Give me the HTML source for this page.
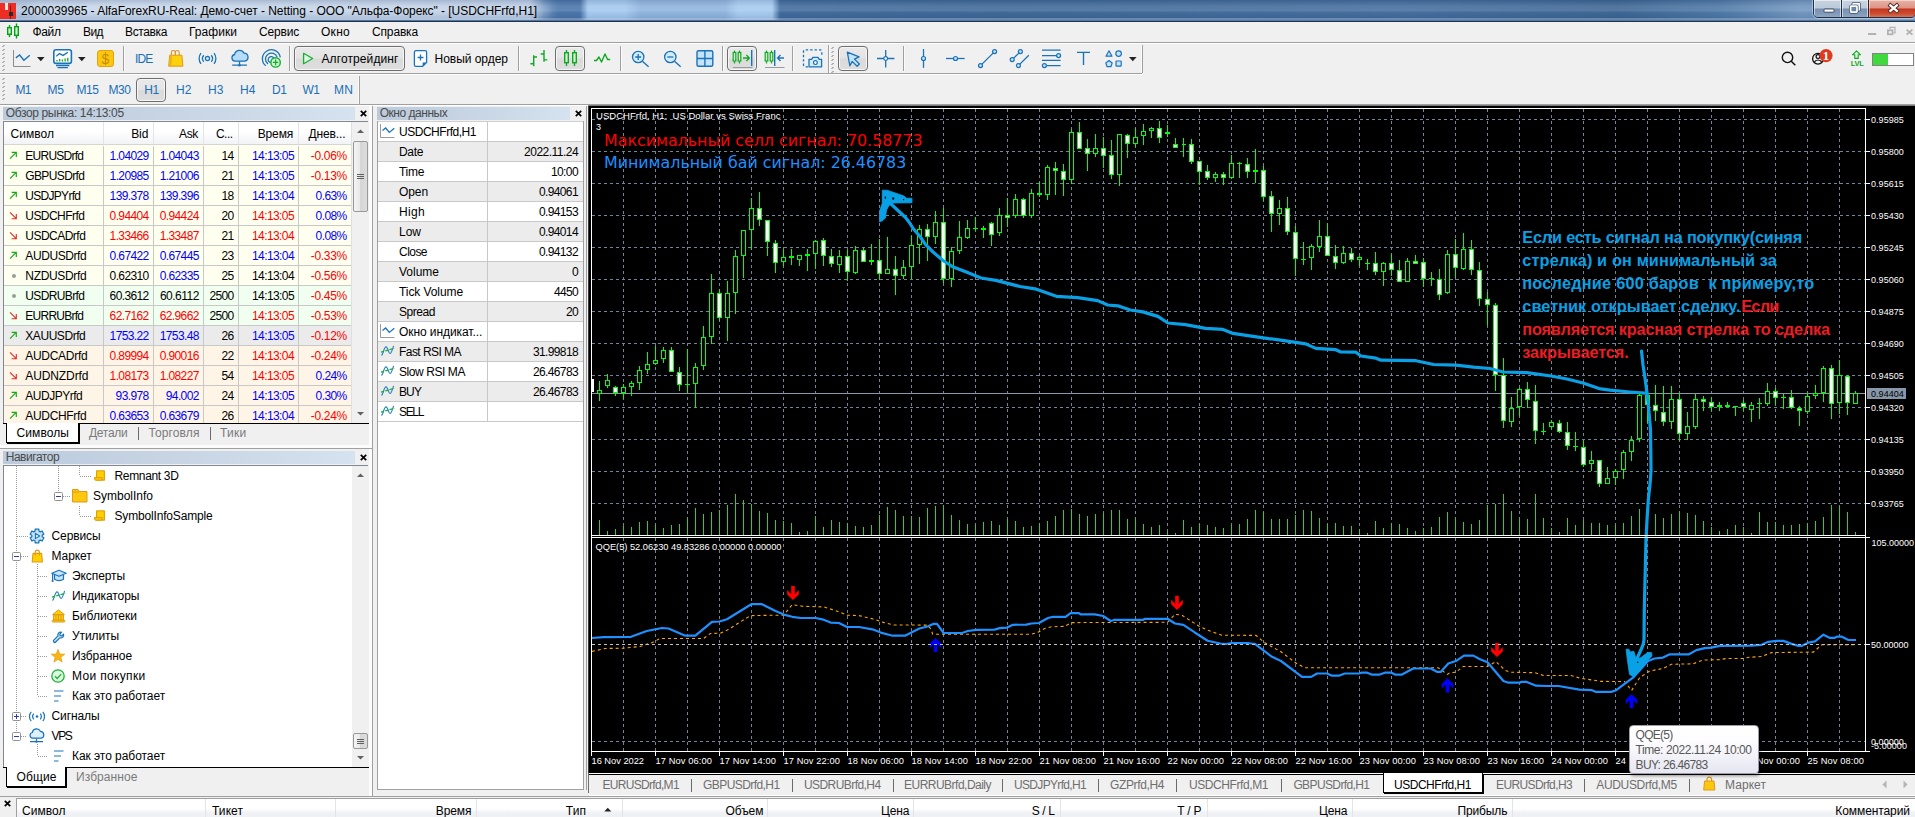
<!DOCTYPE html>
<html lang="ru"><head><meta charset="utf-8"><title>2000039965 - AlfaForexRU-Real</title><style>
html,body{margin:0;padding:0;}
body{width:1915px;height:817px;overflow:hidden;background:#f0f0f0;position:relative;
font-family:"Liberation Sans",sans-serif;font-size:12px;}
.t{position:absolute;white-space:pre;}
.r{position:absolute;}
svg{position:absolute;overflow:visible;}
</style></head>
<body>
<div class="r" style="left:0;top:0;width:1915px;height:21px;background:linear-gradient(90deg,#b0c5df 0px,#b6cae3 120px,#b0c5df 400px,#a9c0dd 530px,#5b84b6 544px,#4a75a9 560px,#4a75a9 580px,#a3c8ee 588px,#a3c8ee 625px,#8fb4dd 640px,#8fb4dd 725px,#a6caef 738px,#a6caef 772px,#416b9c 780px,#3f6997 1000px,#456e9e 1400px,#3d6693 1620px,#4d78a6 1720px,#7196bf 1800px,#6a91ba 1915px);"></div>
<div class="r" style="left:0;top:0;width:1915px;height:21px;background:linear-gradient(180deg,rgba(0,0,40,.10) 0,rgba(255,255,255,.10) 30%,rgba(255,255,255,.12) 50%,rgba(0,0,0,.0) 60%,rgba(0,0,40,.12) 100%);"></div>
<div class="r" style="left:30px;top:2px;width:520px;height:16px;border-radius:8px;background:rgba(255,255,255,.28);filter:blur(4px);"></div>
<div class="r" style="left:0px;top:18px;width:1915px;height:2px;background:rgba(190,215,240,.35);"></div>
<div class="r" style="left:0px;top:20px;width:1915px;height:1px;background:#5a7496;"></div>
<div class="r" style="left:0px;top:21px;width:1915px;height:1px;background:#1c3556;"></div>
<div class="r" style="left:0px;top:3px;width:16px;height:16px;background:#ee2e24;"></div>
<div class="r" style="left:5px;top:3px;width:3px;height:7px;background:#fbe3e0;"></div>
<div class="r" style="left:10px;top:5px;width:1px;height:14px;background:#7a1d18;"></div>
<div class="r" style="left:9px;top:12px;width:4px;height:4px;background:#2a2a2a;"></div>
<div class="t" style="left:21.00px;top:5.00px;font-size:12px;line-height:12px;color:#000;letter-spacing:-0.044px;">2000039965 - AlfaForexRU-Real: Демо-счет - Netting - ООО "Альфа-Форекс" - [USDCHFrfd,H1]</div>
<div class="r" style="left:1813px;top:-1px;width:103px;height:19px;border:1px solid #1f2f45;border-radius:0 0 5px 5px;box-sizing:border-box;overflow:hidden;box-shadow:0 0 0 1px rgba(255,255,255,.35);"><div class="r" style="left:0;top:0;width:27px;height:18px;background:linear-gradient(180deg,#c9d3df 0,#bccada 44%,#7891b2 50%,#829ab9 75%,#93a9c4 100%);box-shadow:inset 0 0 0 1px rgba(255,255,255,.55);"></div><div class="r" style="left:27px;top:0;width:1px;height:18px;background:#1f2f45;"></div><div class="r" style="left:28px;top:0;width:26px;height:18px;background:linear-gradient(180deg,#c9d3df 0,#bccada 44%,#7891b2 50%,#829ab9 75%,#93a9c4 100%);box-shadow:inset 0 0 0 1px rgba(255,255,255,.55);"></div><div class="r" style="left:54px;top:0;width:1px;height:18px;background:#4a1a12;"></div><div class="r" style="left:55px;top:0;width:47px;height:18px;background:linear-gradient(180deg,#e9b3a8 0,#dc9486 44%,#c23820 50%,#cc4a30 75%,#dd7a60 100%);box-shadow:inset 0 0 0 1px rgba(255,255,255,.45);"></div></div>
<svg style="left:0;top:0" width="1915" height="20"><rect x="1824" y="9" width="10" height="3.2" rx="0.6" fill="#fff" stroke="#3b4a5e" stroke-width="1"/><rect x="1853" y="3.6" width="6.4" height="6.4" rx="0.6" fill="#c3cfdc" stroke="#3b4a5e" stroke-width="3"/><rect x="1853" y="3.6" width="6.4" height="6.4" rx="0.6" fill="#b4c3d5" stroke="#fff" stroke-width="1.5"/><rect x="1850.6" y="6.2" width="6.4" height="6" rx="0.6" fill="#7e96b6" stroke="#3b4a5e" stroke-width="3"/><rect x="1850.6" y="6.2" width="6.4" height="6" rx="0.6" fill="#6d87a9" stroke="#fff" stroke-width="1.7"/><path d="M1890.4 5.4L1896.8 10.8M1896.8 5.4L1890.4 10.8" stroke="#4c2019" stroke-width="4" stroke-linecap="square"/><path d="M1890.4 5.4L1896.8 10.8M1896.8 5.4L1890.4 10.8" stroke="#fff" stroke-width="2.4" stroke-linecap="square"/></svg>
<div class="r" style="left:0px;top:22px;width:1915px;height:20px;background:#f0f0f0;"></div>
<div class="r" style="left:0px;top:42px;width:1915px;height:1px;background:#a0a0a0;"></div>
<div class="r" style="left:0px;top:43px;width:1915px;height:1px;background:#ffffff;"></div>
<svg style="left:6px;top:23px" width="16" height="18"><path d="M3.5 2v3M3.5 11v3M10.5 0.5v3.5M10.5 12v3.5" stroke="#00a014" stroke-width="1.4"/><rect x="1.7" y="4.7" width="3.6" height="6.6" fill="#d6f5d8" stroke="#00a014" stroke-width="1.4"/><rect x="8.7" y="3.7" width="3.6" height="8.6" fill="#d6f5d8" stroke="#00a014" stroke-width="1.4"/></svg>
<div class="t" style="left:32.50px;top:26.00px;font-size:12px;line-height:12px;color:#000;letter-spacing:-0.375px;">Файл</div>
<div class="t" style="left:83.00px;top:26.00px;font-size:12px;line-height:12px;color:#000;letter-spacing:-0.570px;">Вид</div>
<div class="t" style="left:125.00px;top:26.00px;font-size:12px;line-height:12px;color:#000;letter-spacing:-0.372px;">Вставка</div>
<div class="t" style="left:189.00px;top:26.00px;font-size:12px;line-height:12px;color:#000;letter-spacing:0.043px;">Графики</div>
<div class="t" style="left:259.00px;top:26.00px;font-size:12px;line-height:12px;color:#000;letter-spacing:-0.182px;">Сервис</div>
<div class="t" style="left:321.00px;top:26.00px;font-size:12px;line-height:12px;color:#000;letter-spacing:0.279px;">Окно</div>
<div class="t" style="left:372.00px;top:26.00px;font-size:12px;line-height:12px;color:#000;letter-spacing:-0.153px;">Справка</div>
<svg style="left:0;top:0" width="1915" height="42"><rect x="1868" y="33" width="8.2" height="2" fill="#b2b2b2"/><path d="M1890 29v-1.6h5v5.4h-1.4" fill="none" stroke="#b2b2b2" stroke-width="1.2"/><rect x="1887.9" y="30.3" width="4.6" height="4" fill="none" stroke="#b2b2b2" stroke-width="1.8"/><path d="M1906.6 29.6L1912.4 34.6M1912.4 29.6L1906.6 34.6" stroke="#b2b2b2" stroke-width="1.9"/></svg><div class="r" style="left:0px;top:73px;width:1142px;height:1px;background:#a0a0a0;"></div>
<div class="r" style="left:0px;top:74px;width:1142px;height:1px;background:#ffffff;"></div>
<div class="r" style="left:0px;top:104px;width:1915px;height:1px;background:#a0a0a0;"></div>
<div class="r" style="left:0px;top:105px;width:1915px;height:1px;background:#ffffff;"></div>
<div class="r" style="left:3px;top:45px;width:2px;height:1px;background:#b0b0b0;"></div><div class="r" style="left:2px;top:46px;width:2px;height:1px;background:#b8b8b8;"></div><div class="r" style="left:3px;top:49px;width:2px;height:1px;background:#b0b0b0;"></div><div class="r" style="left:2px;top:50px;width:2px;height:1px;background:#b8b8b8;"></div><div class="r" style="left:3px;top:53px;width:2px;height:1px;background:#b0b0b0;"></div><div class="r" style="left:2px;top:54px;width:2px;height:1px;background:#b8b8b8;"></div><div class="r" style="left:3px;top:57px;width:2px;height:1px;background:#b0b0b0;"></div><div class="r" style="left:2px;top:58px;width:2px;height:1px;background:#b8b8b8;"></div><div class="r" style="left:3px;top:61px;width:2px;height:1px;background:#b0b0b0;"></div><div class="r" style="left:2px;top:62px;width:2px;height:1px;background:#b8b8b8;"></div><div class="r" style="left:3px;top:65px;width:2px;height:1px;background:#b0b0b0;"></div><div class="r" style="left:2px;top:66px;width:2px;height:1px;background:#b8b8b8;"></div><div class="r" style="left:3px;top:69px;width:2px;height:1px;background:#b0b0b0;"></div><div class="r" style="left:2px;top:70px;width:2px;height:1px;background:#b8b8b8;"></div>
<div class="r" style="left:3px;top:78px;width:2px;height:1px;background:#b0b0b0;"></div><div class="r" style="left:2px;top:79px;width:2px;height:1px;background:#b8b8b8;"></div><div class="r" style="left:3px;top:82px;width:2px;height:1px;background:#b0b0b0;"></div><div class="r" style="left:2px;top:83px;width:2px;height:1px;background:#b8b8b8;"></div><div class="r" style="left:3px;top:86px;width:2px;height:1px;background:#b0b0b0;"></div><div class="r" style="left:2px;top:87px;width:2px;height:1px;background:#b8b8b8;"></div><div class="r" style="left:3px;top:90px;width:2px;height:1px;background:#b0b0b0;"></div><div class="r" style="left:2px;top:91px;width:2px;height:1px;background:#b8b8b8;"></div><div class="r" style="left:3px;top:94px;width:2px;height:1px;background:#b0b0b0;"></div><div class="r" style="left:2px;top:95px;width:2px;height:1px;background:#b8b8b8;"></div><div class="r" style="left:3px;top:98px;width:2px;height:1px;background:#b0b0b0;"></div><div class="r" style="left:2px;top:99px;width:2px;height:1px;background:#b8b8b8;"></div>
<div class="r" style="left:294px;top:46px;width:111px;height:25px;box-sizing:border-box;border:1px solid #6e6e6e;border-radius:4px;background:linear-gradient(180deg,#e9e9e9 0,#e4e4e4 48%,#dadada 52%,#dedede 100%);box-shadow:inset 0 0 0 1px #f6f6f6;"></div>
<div class="r" style="left:555px;top:46px;width:30px;height:25px;box-sizing:border-box;border:1px solid #6e6e6e;border-radius:4px;background:linear-gradient(180deg,#e9e9e9 0,#e4e4e4 48%,#dadada 52%,#dedede 100%);box-shadow:inset 0 0 0 1px #f6f6f6;"></div>
<div class="r" style="left:727px;top:46px;width:30px;height:25px;box-sizing:border-box;border:1px solid #6e6e6e;border-radius:4px;background:linear-gradient(180deg,#e9e9e9 0,#e4e4e4 48%,#dadada 52%,#dedede 100%);box-shadow:inset 0 0 0 1px #f6f6f6;"></div>
<div class="r" style="left:838px;top:46px;width:30px;height:25px;box-sizing:border-box;border:1px solid #6e6e6e;border-radius:4px;background:linear-gradient(180deg,#e9e9e9 0,#e4e4e4 48%,#dadada 52%,#dedede 100%);box-shadow:inset 0 0 0 1px #f6f6f6;"></div>
<div class="r" style="left:136px;top:78px;width:30px;height:24px;box-sizing:border-box;border:1px solid #6e6e6e;border-radius:4px;background:linear-gradient(180deg,#e9e9e9 0,#e4e4e4 48%,#dadada 52%,#dedede 100%);box-shadow:inset 0 0 0 1px #f6f6f6;"></div>
<div class="r" style="left:123px;top:46px;width:1px;height:25px;background:#a0a0a0;"></div><div class="r" style="left:124px;top:46px;width:1px;height:25px;background:#fbfbfb;"></div>
<div class="r" style="left:289px;top:46px;width:1px;height:25px;background:#a0a0a0;"></div><div class="r" style="left:290px;top:46px;width:1px;height:25px;background:#fbfbfb;"></div>
<div class="r" style="left:518px;top:46px;width:1px;height:25px;background:#a0a0a0;"></div><div class="r" style="left:519px;top:46px;width:1px;height:25px;background:#fbfbfb;"></div>
<div class="r" style="left:620px;top:46px;width:1px;height:25px;background:#a0a0a0;"></div><div class="r" style="left:621px;top:46px;width:1px;height:25px;background:#fbfbfb;"></div>
<div class="r" style="left:722px;top:46px;width:1px;height:25px;background:#a0a0a0;"></div><div class="r" style="left:723px;top:46px;width:1px;height:25px;background:#fbfbfb;"></div>
<div class="r" style="left:792px;top:46px;width:1px;height:25px;background:#a0a0a0;"></div><div class="r" style="left:793px;top:46px;width:1px;height:25px;background:#fbfbfb;"></div>
<div class="r" style="left:903px;top:46px;width:1px;height:25px;background:#a0a0a0;"></div><div class="r" style="left:904px;top:46px;width:1px;height:25px;background:#fbfbfb;"></div>
<div class="r" style="left:828px;top:45px;width:1px;height:28px;background:#a0a0a0;"></div><div class="r" style="left:829px;top:45px;width:1px;height:28px;background:#fbfbfb;"></div>
<div class="r" style="left:832px;top:47px;width:2px;height:1px;background:#b0b0b0;"></div><div class="r" style="left:831px;top:48px;width:2px;height:1px;background:#b8b8b8;"></div><div class="r" style="left:832px;top:51px;width:2px;height:1px;background:#b0b0b0;"></div><div class="r" style="left:831px;top:52px;width:2px;height:1px;background:#b8b8b8;"></div><div class="r" style="left:832px;top:55px;width:2px;height:1px;background:#b0b0b0;"></div><div class="r" style="left:831px;top:56px;width:2px;height:1px;background:#b8b8b8;"></div><div class="r" style="left:832px;top:59px;width:2px;height:1px;background:#b0b0b0;"></div><div class="r" style="left:831px;top:60px;width:2px;height:1px;background:#b8b8b8;"></div><div class="r" style="left:832px;top:63px;width:2px;height:1px;background:#b0b0b0;"></div><div class="r" style="left:831px;top:64px;width:2px;height:1px;background:#b8b8b8;"></div><div class="r" style="left:832px;top:67px;width:2px;height:1px;background:#b0b0b0;"></div><div class="r" style="left:831px;top:68px;width:2px;height:1px;background:#b8b8b8;"></div><div class="r" style="left:832px;top:71px;width:2px;height:1px;background:#b0b0b0;"></div><div class="r" style="left:831px;top:72px;width:2px;height:1px;background:#b8b8b8;"></div>
<div class="r" style="left:1141px;top:45px;width:1px;height:28px;background:#fbfbfb;"></div><div class="r" style="left:1142px;top:45px;width:1px;height:28px;background:#a0a0a0;"></div>
<div class="r" style="left:358px;top:76px;width:1px;height:28px;background:#fbfbfb;"></div><div class="r" style="left:359px;top:76px;width:1px;height:28px;background:#a0a0a0;"></div>
<svg style="left:0;top:0" width="1915" height="110"><path d="M13.5 50v16.5h17" fill="none" stroke="#8c8c8c" stroke-width="1"/><path d="M15.8 57.9l3.8-2.9 4.3 5.2 5.9-4.9" fill="none" stroke="#1a73b8" stroke-width="1.4"/><rect x="53.8" y="49.8" width="17.6" height="13.6" rx="2.2" fill="#fff" stroke="#1a73b8" stroke-width="1.6"/><path d="M56 65.5h13.4M57.5 67.6h10.4" stroke="#1a73b8" stroke-width="1.3"/><path d="M56.3 56.2l3.2-2.6 3.6 1.8 4.8-3.2" fill="none" stroke="#1a73b8" stroke-width="1.3"/><path d="M57 61.5v-1.6M59.7 61.5v-2.6M62.4 61.5v-2M65.1 61.5v-3M67.8 61.5v-3.8" stroke="#10a820" stroke-width="1.3"/><rect x="97.5" y="50.5" width="16" height="16" rx="2.5" fill="#fbc70f" stroke="#e3a30c" stroke-width="1"/><path d="M171.4 56v-3.6a1.9 1.9 0 0 1 3.8 0v3.6M175.4 56v-3.6a1.9 1.9 0 0 1 3.8 0v3.6" fill="none" stroke="#d9951c" stroke-width="1.1"/><path d="M169.7 55.2h12.2l1 11h-14.2z" fill="#fbd20d" stroke="#dd9a1a" stroke-width="1"/><path d="M169.7 55.2h2.3l-.6 11h-2.7z" fill="#eeb212"/><circle cx="207.5" cy="58.5" r="2.1" fill="#c5e3fa" stroke="#1a73b8" stroke-width="1.2"/><path d="M203.8 55.2a5 5 0 0 0 0 6.6M211.2 55.2a5 5 0 0 1 0 6.6M201 53.2a8.4 8.4 0 0 0 0 10.6M214 53.2a8.4 8.4 0 0 1 0 10.6" fill="none" stroke="#1a73b8" stroke-width="1.3"/><path d="M235 61.2a3.4 3.4 0 0 1 -.4-6.7 5 5 0 0 1 9.4-1.4 4.1 4.1 0 0 1 .8 8.1z" fill="#b5dcf8" stroke="#1a73b8" stroke-width="1.3"/><path d="M239.5 61.5v2.5M232.2 65.2h14.8" stroke="#1a73b8" stroke-width="1.3"/><circle cx="239.5" cy="65.2" r="1.3" fill="#1a73b8"/><path d="M270.5 62.5a3 3 0 1 1 3.5-4M268 64a6 6 0 1 1 9.2-6.6M265.8 65.8a9 9 0 1 1 14.5-8.4" fill="none" stroke="#1a73b8" stroke-width="1.3"/><circle cx="275.6" cy="62.4" r="4.7" fill="#d9f7dc" stroke="#12b02a" stroke-width="1.4"/><path d="M272.8 62.4h5.6M275.6 59.6v5.6" stroke="#12b02a" stroke-width="1.4"/><path d="M303.6 53.3l9 5.2-9 5.2z" fill="#dff8e2" stroke="#17b030" stroke-width="1.3" stroke-linejoin="round"/><path d="M416 50.6h9a1.6 1.6 0 0 1 1.6 1.6v10.2l-4 4H416a1.6 1.6 0 0 1 -1.6-1.6V52.2a1.6 1.6 0 0 1 1.6-1.6z" fill="#fff" stroke="#1a73b8" stroke-width="1.3"/><path d="M426.6 62.4h-4v4z" fill="#1a73b8"/><path d="M417.6 57.5h5.8M420.5 54.6v5.8" stroke="#1a73b8" stroke-width="1.3"/><path d="M533.7 55.2v11M530.4 63.8h3.3M533.7 57h3.3M544 50v11.8M540.7 54h3.3M544 59.9h3.3" fill="none" stroke="#10a820" stroke-width="1.4"/><path d="M566.5 50v2.5M566.5 63v3M574.5 50v2.5M574.5 63v3" stroke="#10a820" stroke-width="1.4"/><rect x="564.7" y="52.7" width="3.6" height="10" fill="#d6f5d8" stroke="#10a820" stroke-width="1.4"/><rect x="572.7" y="52.7" width="3.6" height="10" fill="#d6f5d8" stroke="#10a820" stroke-width="1.4"/><path d="M594 60.5h2.5l2.5-3.5 2.5 5 3.5-8 2.6 5.5h2.6" fill="none" stroke="#10a820" stroke-width="1.4" stroke-linejoin="round"/><circle cx="638.2" cy="57" r="5.7" fill="#d4ebfc" stroke="#1a73b8" stroke-width="1.3"/><path d="M642.4000000000001 61.2l6.2 5.6" stroke="#1a73b8" stroke-width="1.4"/><path d="M635.2 57h6M638.2 54v6" stroke="#1a73b8" stroke-width="1.3"/><circle cx="670.3" cy="57" r="5.7" fill="#d4ebfc" stroke="#1a73b8" stroke-width="1.3"/><path d="M674.5 61.2l6.2 5.6" stroke="#1a73b8" stroke-width="1.4"/><path d="M667.3 57h6" stroke="#1a73b8" stroke-width="1.3"/><rect x="697" y="50.7" width="15.8" height="15.6" rx="1.5" fill="#c5e3fa" stroke="#1a73b8" stroke-width="1.4"/><path d="M704.9 50.7v15.6M697 58.5h15.8" stroke="#1a73b8" stroke-width="1.4"/><path d="M734.5 50.5v2M734.5 61.5v2" stroke="#10a820" stroke-width="1.2"/><rect x="733.2" y="52.5" width="2.6" height="8.5" fill="#d6f5d8" stroke="#10a820" stroke-width="1.2"/><path d="M739.5 50.5v2M739.5 61.5v2" stroke="#10a820" stroke-width="1.2"/><rect x="738.2" y="52.5" width="2.6" height="8.5" fill="#d6f5d8" stroke="#10a820" stroke-width="1.2"/><path d="M743 58h6M746.4 55l3 3-3 3" fill="none" stroke="#10a820" stroke-width="1.3"/><path d="M751.7 50v16" stroke="#1a73b8" stroke-width="1.4"/><path d="M733 67.5h19.5" stroke="#9a9a9a" stroke-width="1"/><path d="M766.5 50.5v2M766.5 61.5v2" stroke="#10a820" stroke-width="1.2"/><rect x="765.2" y="52.5" width="2.6" height="8.5" fill="#d6f5d8" stroke="#10a820" stroke-width="1.2"/><path d="M771.5 50.5v2M771.5 61.5v2" stroke="#10a820" stroke-width="1.2"/><rect x="770.2" y="52.5" width="2.6" height="8.5" fill="#d6f5d8" stroke="#10a820" stroke-width="1.2"/><path d="M774.7 50v16" stroke="#1a73b8" stroke-width="1.4"/><path d="M777.5 58h6.5M780.5 55l-3 3 3 3" fill="none" stroke="#1a73b8" stroke-width="1.3"/><path d="M765 67.5h19.5" stroke="#9a9a9a" stroke-width="1"/><path d="M808 66.8h-3a1.5 1.5 0 0 1 -1.5-1.5V51.3a1.5 1.5 0 0 1 1.5-1.5h15.3a1.5 1.5 0 0 1 1.5 1.5v4" fill="none" stroke="#1a73b8" stroke-width="1.3" stroke-dasharray="2.4 2"/><path d="M809 59.3h2.6l1.2-2h5.2l1.2 2h2.4v7.5H809z" fill="#d4ebfc" stroke="#1a73b8" stroke-width="1.3" stroke-linejoin="round"/><circle cx="815.4" cy="62.6" r="1.9" fill="#fff" stroke="#1a73b8" stroke-width="1.2"/><path d="M847.3 52.2l11.8 4.6-4.6 2.3 4.9 4.9-2.3 2.3-4.9-4.9-2.3 4.4z" fill="#c5e3fa" stroke="#1a73b8" stroke-width="1.3" stroke-linejoin="round"/><path d="M877 58.5h17.4M885.7 50v17.5" stroke="#1a73b8" stroke-width="1.3"/><circle cx="885.7" cy="58.5" r="1.9" fill="#fff" stroke="#1a73b8" stroke-width="1.2"/><path d="M923.5 49v18.8" stroke="#1a73b8" stroke-width="1.3"/><circle cx="923.5" cy="58.5" r="2" fill="#c5e3fa" stroke="#1a73b8" stroke-width="1.2"/><path d="M946 58.5h18.6" stroke="#1a73b8" stroke-width="1.3"/><circle cx="955.5" cy="58.5" r="2" fill="#c5e3fa" stroke="#1a73b8" stroke-width="1.2"/><path d="M980.5 65.6L994.6 51.6" stroke="#1a73b8" stroke-width="1.3"/><circle cx="980.5" cy="65.6" r="2" fill="#c5e3fa" stroke="#1a73b8" stroke-width="1.2"/><circle cx="994.6" cy="51.6" r="2" fill="#c5e3fa" stroke="#1a73b8" stroke-width="1.2"/><path d="M1012.2 59.6l8.2-8M1018.4 65.6l10.4-10.4" stroke="#1a73b8" stroke-width="1.3"/><circle cx="1012.2" cy="59.6" r="2" fill="#c5e3fa" stroke="#1a73b8" stroke-width="1.2"/><circle cx="1020.4" cy="51.6" r="2" fill="#c5e3fa" stroke="#1a73b8" stroke-width="1.2"/><circle cx="1018.4" cy="65.6" r="2" fill="#c5e3fa" stroke="#1a73b8" stroke-width="1.2"/><path d="M1042 50.2h18.6M1042 55.6h18.6M1042 60.4h18.6M1042 65.6h18.6" stroke="#1a73b8" stroke-width="1.3"/><circle cx="1058.6" cy="55.6" r="2" fill="#c5e3fa" stroke="#1a73b8" stroke-width="1.2"/><circle cx="1044.4" cy="65.6" r="2" fill="#c5e3fa" stroke="#1a73b8" stroke-width="1.2"/><path d="M1077 52.4h13M1083.5 52.4v12.6" fill="none" stroke="#1a73b8" stroke-width="1.4"/><path d="M1109 50.8l3 5.4h-6z" fill="#c5e3fa" stroke="#1a73b8" stroke-width="1.2" stroke-linejoin="round"/><circle cx="1118.6" cy="53.6" r="2.8" fill="#c5e3fa" stroke="#1a73b8" stroke-width="1.2"/><path d="M1109 60.6l3.2 2.3-1.2 3.7h-4l-1.2-3.7z" fill="#c5e3fa" stroke="#1a73b8" stroke-width="1.2" stroke-linejoin="round"/><rect x="1116" y="61" width="5.2" height="5.2" rx="0.8" fill="#c5e3fa" stroke="#1a73b8" stroke-width="1.2"/><circle cx="1787.5" cy="57.4" r="5.2" fill="none" stroke="#111" stroke-width="1.4"/><path d="M1791.3 61.2l4 4" stroke="#111" stroke-width="1.5"/><circle cx="1818" cy="58.7" r="5.4" fill="none" stroke="#111" stroke-width="1.3"/><circle cx="1818" cy="56.6" r="1.9" fill="none" stroke="#111" stroke-width="1.2"/><path d="M1814.2 62.4a4.2 4.2 0 0 1 7.6 0" fill="none" stroke="#111" stroke-width="1.2"/><circle cx="1826" cy="55.6" r="6.6" fill="#e03a1e"/><path d="M1856.5 50.8l4 4h-2.3v3.6h-3.4v-3.6h-2.3z" fill="#d9f7dc" stroke="#10a820" stroke-width="1.1" stroke-linejoin="round"/></svg>
<svg style="left:36.5px;top:57px" width="8" height="5"><path d="M0 0h7.6L3.8 4.2z" fill="#222"/></svg><svg style="left:77.5px;top:57px" width="8" height="5"><path d="M0 0h7.6L3.8 4.2z" fill="#222"/></svg><svg style="left:1128.8px;top:57px" width="8" height="5"><path d="M0 0h7.6L3.8 4.2z" fill="#222"/></svg>
<div class="t" style="left:101.60px;top:52.00px;font-size:14px;line-height:14px;color:#c78f08;">$</div>
<div class="r" style="left:105px;top:52px;width:1px;height:13px;background:#c78f08;"></div>
<div class="t" style="left:135.00px;top:53.00px;font-size:12px;line-height:12px;color:#1a6fb5;letter-spacing:-0.835px;">IDE</div>
<div class="t" style="left:321.50px;top:53.00px;font-size:12px;line-height:12px;color:#000;letter-spacing:0.102px;">Алготрейдинг</div>
<div class="t" style="left:434.50px;top:53.00px;font-size:12px;line-height:12px;color:#000;letter-spacing:-0.027px;">Новый ордер</div>
<div class="t" style="left:1822.80px;top:49.00px;font-size:13px;line-height:13px;color:#fff;font-weight:bold;font-family:'Liberation Serif',serif;">1</div>
<div class="t" style="left:1850.80px;top:60.00px;font-size:7.5px;line-height:7.5px;color:#12a529;letter-spacing:-0.336px;font-weight:bold;">LVL</div>
<div class="r" style="left:1872px;top:53px;width:42px;height:13px;box-sizing:border-box;border:1px solid #828282;background:#fff;"></div>
<div class="r" style="left:1873px;top:54px;width:15px;height:11px;background:#3fd83f;"></div>
<div class="t" style="left:15.50px;top:84.00px;font-size:12px;line-height:12px;color:#1a6fb5;letter-spacing:-0.834px;">M1</div>
<div class="t" style="left:47.50px;top:84.00px;font-size:12px;line-height:12px;color:#1a6fb5;letter-spacing:-0.334px;">M5</div>
<div class="t" style="left:76.50px;top:84.00px;font-size:12px;line-height:12px;color:#1a6fb5;letter-spacing:-0.447px;">M15</div>
<div class="t" style="left:108.50px;top:84.00px;font-size:12px;line-height:12px;color:#1a6fb5;letter-spacing:-0.447px;">M30</div>
<div class="t" style="left:144.30px;top:84.00px;font-size:12px;line-height:12px;color:#1a6fb5;letter-spacing:-0.420px;">H1</div>
<div class="t" style="left:176.00px;top:84.00px;font-size:12px;line-height:12px;color:#1a6fb5;letter-spacing:0.080px;">H2</div>
<div class="t" style="left:208.00px;top:84.00px;font-size:12px;line-height:12px;color:#1a6fb5;letter-spacing:0.080px;">H3</div>
<div class="t" style="left:240.00px;top:84.00px;font-size:12px;line-height:12px;color:#1a6fb5;letter-spacing:0.080px;">H4</div>
<div class="t" style="left:272.00px;top:84.00px;font-size:12px;line-height:12px;color:#1a6fb5;letter-spacing:-0.420px;">D1</div>
<div class="t" style="left:302.50px;top:84.00px;font-size:12px;line-height:12px;color:#1a6fb5;letter-spacing:-0.500px;">W1</div>
<div class="t" style="left:334.00px;top:84.00px;font-size:12px;line-height:12px;color:#1a6fb5;letter-spacing:0.169px;">MN</div><div class="r" style="left:369px;top:106px;width:3px;height:690px;background:#fcfcfc;"></div>
<div class="r" style="left:372px;top:106px;width:1px;height:690px;background:#a0a0a0;"></div>
<div class="r" style="left:3px;top:107px;width:352px;height:13px;background:linear-gradient(90deg,#bccbdc 0,#c8d6e5 55%,#d5e3f0 100%);"></div><div class="t" style="left:5.70px;top:107.00px;font-size:12px;line-height:12px;color:#4a4a4a;letter-spacing:-0.356px;">Обзор рынка: 14:13:05</div>
<svg style="left:359.5px;top:109.5px" width="8" height="8"><path d="M0.8 0.8L6.2 6.2M6.2 0.8L0.8 6.2" stroke="#000" stroke-width="1.7"/></svg>
<div class="r" style="left:3px;top:121px;width:365px;height:302px;box-sizing:border-box;border:1px solid #828790;border-bottom:none;background:#fff;overflow:hidden;"></div>
<div class="r" style="left:4px;top:122px;width:347px;height:22px;background:linear-gradient(180deg,#ffffff 0,#ffffff 40%,#f2f3f6 100%);"></div>
<div class="r" style="left:4px;top:144px;width:347px;height:1px;background:#d5d5d5;"></div>
<div class="r" style="left:103px;top:122px;width:1px;height:22px;background:#e3e4e8;"></div>
<div class="r" style="left:153px;top:122px;width:1px;height:22px;background:#e3e4e8;"></div>
<div class="r" style="left:203px;top:122px;width:1px;height:22px;background:#e3e4e8;"></div>
<div class="r" style="left:238px;top:122px;width:1px;height:22px;background:#e3e4e8;"></div>
<div class="r" style="left:298px;top:122px;width:1px;height:22px;background:#e3e4e8;"></div>
<div class="r" style="left:351px;top:122px;width:1px;height:301px;background:#e0e0e0;"></div>
<div class="t" style="left:10.50px;top:128.00px;font-size:12px;line-height:12px;color:#000;letter-spacing:0.038px;">Символ</div>
<div class="t" style="left:131.19px;top:128.00px;font-size:12px;line-height:12px;color:#000;letter-spacing:-0.115px;">Bid</div>
<div class="t" style="left:178.97px;top:128.00px;font-size:12px;line-height:12px;color:#000;letter-spacing:-0.335px;">Ask</div>
<div class="t" style="left:216.00px;top:128.00px;font-size:12px;line-height:12px;color:#000;letter-spacing:-0.542px;">С...</div>
<div class="t" style="left:257.63px;top:128.00px;font-size:12px;line-height:12px;color:#000;letter-spacing:-0.108px;">Время</div>
<div class="t" style="left:308.50px;top:128.00px;font-size:12px;line-height:12px;color:#000;letter-spacing:-0.115px;">Днев...</div>
<div class="r" style="left:4px;top:145px;width:347px;height:20px;background:#fffff0;"></div>
<svg style="left:9px;top:151px" width="9" height="9"><path d="M1 7.6L7 1.6M2.6 1.3h4.7v4.7" fill="none" stroke="#18a818" stroke-width="1.15"/></svg>
<div class="t" style="left:25.30px;top:150.00px;font-size:12px;line-height:12px;color:#000;letter-spacing:-0.742px;">EURUSDrfd</div>
<div class="t" style="left:109.58px;top:150.00px;font-size:12px;line-height:12px;color:#0000ff;letter-spacing:-0.625px;">1.04029</div>
<div class="t" style="left:159.78px;top:150.00px;font-size:12px;line-height:12px;color:#0000ff;letter-spacing:-0.625px;">1.04043</div>
<div class="t" style="left:221.53px;top:150.00px;font-size:12px;line-height:12px;color:#000;letter-spacing:-0.673px;">14</div>
<div class="t" style="left:252.01px;top:150.00px;font-size:12px;line-height:12px;color:#0000ff;letter-spacing:-0.588px;">14:13:05</div>
<div class="t" style="left:310.86px;top:150.00px;font-size:12px;line-height:12px;color:#ff0000;letter-spacing:-0.337px;">-0.06%</div>
<div class="r" style="left:4px;top:165px;width:347px;height:20px;background:#fffff0;"></div>
<svg style="left:9px;top:171px" width="9" height="9"><path d="M1 7.6L7 1.6M2.6 1.3h4.7v4.7" fill="none" stroke="#18a818" stroke-width="1.15"/></svg>
<div class="t" style="left:25.30px;top:170.00px;font-size:12px;line-height:12px;color:#000;letter-spacing:-0.631px;">GBPUSDrfd</div>
<div class="t" style="left:109.58px;top:170.00px;font-size:12px;line-height:12px;color:#0000ff;letter-spacing:-0.625px;">1.20985</div>
<div class="t" style="left:159.78px;top:170.00px;font-size:12px;line-height:12px;color:#0000ff;letter-spacing:-0.625px;">1.21006</div>
<div class="t" style="left:221.53px;top:170.00px;font-size:12px;line-height:12px;color:#000;letter-spacing:-0.673px;">21</div>
<div class="t" style="left:252.01px;top:170.00px;font-size:12px;line-height:12px;color:#0000ff;letter-spacing:-0.588px;">14:13:05</div>
<div class="t" style="left:310.86px;top:170.00px;font-size:12px;line-height:12px;color:#ff0000;letter-spacing:-0.337px;">-0.13%</div>
<div class="r" style="left:4px;top:185px;width:347px;height:20px;background:#fffff0;"></div>
<svg style="left:9px;top:191px" width="9" height="9"><path d="M1 7.6L7 1.6M2.6 1.3h4.7v4.7" fill="none" stroke="#18a818" stroke-width="1.15"/></svg>
<div class="t" style="left:25.30px;top:190.00px;font-size:12px;line-height:12px;color:#000;letter-spacing:-0.705px;">USDJPYrfd</div>
<div class="t" style="left:109.58px;top:190.00px;font-size:12px;line-height:12px;color:#0000ff;letter-spacing:-0.625px;">139.378</div>
<div class="t" style="left:159.78px;top:190.00px;font-size:12px;line-height:12px;color:#0000ff;letter-spacing:-0.625px;">139.396</div>
<div class="t" style="left:221.53px;top:190.00px;font-size:12px;line-height:12px;color:#000;letter-spacing:-0.673px;">18</div>
<div class="t" style="left:252.01px;top:190.00px;font-size:12px;line-height:12px;color:#0000ff;letter-spacing:-0.588px;">14:13:04</div>
<div class="t" style="left:315.60px;top:190.00px;font-size:12px;line-height:12px;color:#0000ff;letter-spacing:-0.605px;">0.63%</div>
<div class="r" style="left:4px;top:205px;width:347px;height:20px;background:#fffff0;"></div>
<svg style="left:9px;top:211px" width="9" height="9"><path d="M1 1.4L7 7.4M2.6 7.7h4.7v-4.7" fill="none" stroke="#e03030" stroke-width="1.15"/></svg>
<div class="t" style="left:25.30px;top:210.00px;font-size:12px;line-height:12px;color:#000;letter-spacing:-0.556px;">USDCHFrfd</div>
<div class="t" style="left:109.58px;top:210.00px;font-size:12px;line-height:12px;color:#ff0000;letter-spacing:-0.625px;">0.94404</div>
<div class="t" style="left:159.78px;top:210.00px;font-size:12px;line-height:12px;color:#ff0000;letter-spacing:-0.625px;">0.94424</div>
<div class="t" style="left:221.53px;top:210.00px;font-size:12px;line-height:12px;color:#000;letter-spacing:-0.673px;">20</div>
<div class="t" style="left:252.01px;top:210.00px;font-size:12px;line-height:12px;color:#ff0000;letter-spacing:-0.588px;">14:13:05</div>
<div class="t" style="left:315.60px;top:210.00px;font-size:12px;line-height:12px;color:#0000ff;letter-spacing:-0.605px;">0.08%</div>
<div class="r" style="left:4px;top:225px;width:347px;height:20px;background:#fffff0;"></div>
<svg style="left:9px;top:231px" width="9" height="9"><path d="M1 1.4L7 7.4M2.6 7.7h4.7v-4.7" fill="none" stroke="#e03030" stroke-width="1.15"/></svg>
<div class="t" style="left:25.30px;top:230.00px;font-size:12px;line-height:12px;color:#000;letter-spacing:-0.520px;">USDCADrfd</div>
<div class="t" style="left:109.58px;top:230.00px;font-size:12px;line-height:12px;color:#ff0000;letter-spacing:-0.625px;">1.33466</div>
<div class="t" style="left:159.78px;top:230.00px;font-size:12px;line-height:12px;color:#ff0000;letter-spacing:-0.625px;">1.33487</div>
<div class="t" style="left:221.53px;top:230.00px;font-size:12px;line-height:12px;color:#000;letter-spacing:-0.673px;">21</div>
<div class="t" style="left:252.01px;top:230.00px;font-size:12px;line-height:12px;color:#ff0000;letter-spacing:-0.588px;">14:13:04</div>
<div class="t" style="left:315.60px;top:230.00px;font-size:12px;line-height:12px;color:#0000ff;letter-spacing:-0.605px;">0.08%</div>
<div class="r" style="left:4px;top:245px;width:347px;height:20px;background:#fffff0;"></div>
<svg style="left:9px;top:251px" width="9" height="9"><path d="M1 7.6L7 1.6M2.6 1.3h4.7v4.7" fill="none" stroke="#18a818" stroke-width="1.15"/></svg>
<div class="t" style="left:25.30px;top:250.00px;font-size:12px;line-height:12px;color:#000;letter-spacing:-0.408px;">AUDUSDrfd</div>
<div class="t" style="left:109.58px;top:250.00px;font-size:12px;line-height:12px;color:#0000ff;letter-spacing:-0.625px;">0.67422</div>
<div class="t" style="left:159.78px;top:250.00px;font-size:12px;line-height:12px;color:#0000ff;letter-spacing:-0.625px;">0.67445</div>
<div class="t" style="left:221.53px;top:250.00px;font-size:12px;line-height:12px;color:#000;letter-spacing:-0.673px;">23</div>
<div class="t" style="left:252.01px;top:250.00px;font-size:12px;line-height:12px;color:#0000ff;letter-spacing:-0.588px;">14:13:04</div>
<div class="t" style="left:310.86px;top:250.00px;font-size:12px;line-height:12px;color:#ff0000;letter-spacing:-0.337px;">-0.33%</div>
<div class="r" style="left:4px;top:265px;width:347px;height:20px;background:#fffff0;"></div>
<div class="r" style="left:11.5px;top:273.5px;width:4px;height:4px;border-radius:2px;background:#9c9c9c;"></div>
<div class="t" style="left:25.30px;top:270.00px;font-size:12px;line-height:12px;color:#000;letter-spacing:-0.333px;">NZDUSDrfd</div>
<div class="t" style="left:109.58px;top:270.00px;font-size:12px;line-height:12px;color:#000;letter-spacing:-0.625px;">0.62310</div>
<div class="t" style="left:159.78px;top:270.00px;font-size:12px;line-height:12px;color:#0000ff;letter-spacing:-0.625px;">0.62335</div>
<div class="t" style="left:221.53px;top:270.00px;font-size:12px;line-height:12px;color:#000;letter-spacing:-0.673px;">25</div>
<div class="t" style="left:252.01px;top:270.00px;font-size:12px;line-height:12px;color:#000;letter-spacing:-0.588px;">14:13:04</div>
<div class="t" style="left:310.86px;top:270.00px;font-size:12px;line-height:12px;color:#ff0000;letter-spacing:-0.337px;">-0.56%</div>
<div class="r" style="left:4px;top:285px;width:347px;height:20px;background:#f0fff0;"></div>
<div class="r" style="left:11.5px;top:293.5px;width:4px;height:4px;border-radius:2px;background:#9c9c9c;"></div>
<div class="t" style="left:25.30px;top:290.00px;font-size:12px;line-height:12px;color:#000;letter-spacing:-0.631px;">USDRUBrfd</div>
<div class="t" style="left:109.58px;top:290.00px;font-size:12px;line-height:12px;color:#000;letter-spacing:-0.625px;">60.3612</div>
<div class="t" style="left:159.90px;top:290.00px;font-size:12px;line-height:12px;color:#000;letter-spacing:-0.497px;">60.6112</div>
<div class="t" style="left:209.53px;top:290.00px;font-size:12px;line-height:12px;color:#000;letter-spacing:-0.673px;">2500</div>
<div class="t" style="left:252.01px;top:290.00px;font-size:12px;line-height:12px;color:#000;letter-spacing:-0.588px;">14:13:05</div>
<div class="t" style="left:310.86px;top:290.00px;font-size:12px;line-height:12px;color:#ff0000;letter-spacing:-0.337px;">-0.45%</div>
<div class="r" style="left:4px;top:305px;width:347px;height:20px;background:#f0fff0;"></div>
<svg style="left:9px;top:311px" width="9" height="9"><path d="M1 1.4L7 7.4M2.6 7.7h4.7v-4.7" fill="none" stroke="#e03030" stroke-width="1.15"/></svg>
<div class="t" style="left:25.30px;top:310.00px;font-size:12px;line-height:12px;color:#000;letter-spacing:-0.742px;">EURRUBrfd</div>
<div class="t" style="left:109.58px;top:310.00px;font-size:12px;line-height:12px;color:#ff0000;letter-spacing:-0.625px;">62.7162</div>
<div class="t" style="left:159.78px;top:310.00px;font-size:12px;line-height:12px;color:#ff0000;letter-spacing:-0.625px;">62.9662</div>
<div class="t" style="left:209.53px;top:310.00px;font-size:12px;line-height:12px;color:#000;letter-spacing:-0.673px;">2500</div>
<div class="t" style="left:252.01px;top:310.00px;font-size:12px;line-height:12px;color:#ff0000;letter-spacing:-0.588px;">14:13:05</div>
<div class="t" style="left:310.86px;top:310.00px;font-size:12px;line-height:12px;color:#ff0000;letter-spacing:-0.337px;">-0.53%</div>
<div class="r" style="left:4px;top:325px;width:347px;height:20px;background:#ebebeb;"></div>
<svg style="left:9px;top:331px" width="9" height="9"><path d="M1 7.6L7 1.6M2.6 1.3h4.7v4.7" fill="none" stroke="#18a818" stroke-width="1.15"/></svg>
<div class="t" style="left:25.30px;top:330.00px;font-size:12px;line-height:12px;color:#000;letter-spacing:-0.446px;">XAUUSDrfd</div>
<div class="t" style="left:109.58px;top:330.00px;font-size:12px;line-height:12px;color:#0000ff;letter-spacing:-0.625px;">1753.22</div>
<div class="t" style="left:159.78px;top:330.00px;font-size:12px;line-height:12px;color:#0000ff;letter-spacing:-0.625px;">1753.48</div>
<div class="t" style="left:221.53px;top:330.00px;font-size:12px;line-height:12px;color:#000;letter-spacing:-0.673px;">26</div>
<div class="t" style="left:252.01px;top:330.00px;font-size:12px;line-height:12px;color:#0000ff;letter-spacing:-0.588px;">14:13:05</div>
<div class="t" style="left:310.86px;top:330.00px;font-size:12px;line-height:12px;color:#ff0000;letter-spacing:-0.337px;">-0.12%</div>
<div class="r" style="left:4px;top:345px;width:347px;height:20px;background:#fff5e6;"></div>
<svg style="left:9px;top:351px" width="9" height="9"><path d="M1 1.4L7 7.4M2.6 7.7h4.7v-4.7" fill="none" stroke="#e03030" stroke-width="1.15"/></svg>
<div class="t" style="left:25.30px;top:350.00px;font-size:12px;line-height:12px;color:#000;letter-spacing:-0.297px;">AUDCADrfd</div>
<div class="t" style="left:109.58px;top:350.00px;font-size:12px;line-height:12px;color:#ff0000;letter-spacing:-0.625px;">0.89994</div>
<div class="t" style="left:159.78px;top:350.00px;font-size:12px;line-height:12px;color:#ff0000;letter-spacing:-0.625px;">0.90016</div>
<div class="t" style="left:221.53px;top:350.00px;font-size:12px;line-height:12px;color:#000;letter-spacing:-0.673px;">22</div>
<div class="t" style="left:252.01px;top:350.00px;font-size:12px;line-height:12px;color:#ff0000;letter-spacing:-0.588px;">14:13:04</div>
<div class="t" style="left:310.86px;top:350.00px;font-size:12px;line-height:12px;color:#ff0000;letter-spacing:-0.337px;">-0.24%</div>
<div class="r" style="left:4px;top:365px;width:347px;height:20px;background:#fff5e6;"></div>
<svg style="left:9px;top:371px" width="9" height="9"><path d="M1 1.4L7 7.4M2.6 7.7h4.7v-4.7" fill="none" stroke="#e03030" stroke-width="1.15"/></svg>
<div class="t" style="left:25.30px;top:370.00px;font-size:12px;line-height:12px;color:#000;letter-spacing:-0.111px;">AUDNZDrfd</div>
<div class="t" style="left:109.58px;top:370.00px;font-size:12px;line-height:12px;color:#ff0000;letter-spacing:-0.625px;">1.08173</div>
<div class="t" style="left:159.78px;top:370.00px;font-size:12px;line-height:12px;color:#ff0000;letter-spacing:-0.625px;">1.08227</div>
<div class="t" style="left:221.53px;top:370.00px;font-size:12px;line-height:12px;color:#000;letter-spacing:-0.673px;">54</div>
<div class="t" style="left:252.01px;top:370.00px;font-size:12px;line-height:12px;color:#ff0000;letter-spacing:-0.588px;">14:13:05</div>
<div class="t" style="left:315.60px;top:370.00px;font-size:12px;line-height:12px;color:#0000ff;letter-spacing:-0.605px;">0.24%</div>
<div class="r" style="left:4px;top:385px;width:347px;height:20px;background:#fff5e6;"></div>
<svg style="left:9px;top:391px" width="9" height="9"><path d="M1 7.6L7 1.6M2.6 1.3h4.7v4.7" fill="none" stroke="#18a818" stroke-width="1.15"/></svg>
<div class="t" style="left:25.30px;top:390.00px;font-size:12px;line-height:12px;color:#000;letter-spacing:-0.483px;">AUDJPYrfd</div>
<div class="t" style="left:115.58px;top:390.00px;font-size:12px;line-height:12px;color:#0000ff;letter-spacing:-0.617px;">93.978</div>
<div class="t" style="left:165.78px;top:390.00px;font-size:12px;line-height:12px;color:#0000ff;letter-spacing:-0.617px;">94.002</div>
<div class="t" style="left:221.53px;top:390.00px;font-size:12px;line-height:12px;color:#000;letter-spacing:-0.673px;">24</div>
<div class="t" style="left:252.01px;top:390.00px;font-size:12px;line-height:12px;color:#0000ff;letter-spacing:-0.588px;">14:13:05</div>
<div class="t" style="left:315.60px;top:390.00px;font-size:12px;line-height:12px;color:#0000ff;letter-spacing:-0.605px;">0.30%</div>
<div class="r" style="left:4px;top:405px;width:347px;height:18px;background:#fff5e6;"></div>
<svg style="left:9px;top:411px" width="9" height="9"><path d="M1 7.6L7 1.6M2.6 1.3h4.7v4.7" fill="none" stroke="#18a818" stroke-width="1.15"/></svg>
<div class="t" style="left:25.30px;top:410.00px;font-size:12px;line-height:12px;color:#000;letter-spacing:-0.333px;">AUDCHFrfd</div>
<div class="t" style="left:109.58px;top:410.00px;font-size:12px;line-height:12px;color:#0000ff;letter-spacing:-0.625px;">0.63653</div>
<div class="t" style="left:159.78px;top:410.00px;font-size:12px;line-height:12px;color:#0000ff;letter-spacing:-0.625px;">0.63679</div>
<div class="t" style="left:221.53px;top:410.00px;font-size:12px;line-height:12px;color:#000;letter-spacing:-0.673px;">26</div>
<div class="t" style="left:252.01px;top:410.00px;font-size:12px;line-height:12px;color:#0000ff;letter-spacing:-0.588px;">14:13:04</div>
<div class="t" style="left:310.86px;top:410.00px;font-size:12px;line-height:12px;color:#ff0000;letter-spacing:-0.337px;">-0.24%</div>
<div class="r" style="left:4px;top:165px;width:347px;height:1px;background:#c8c8c8;"></div>
<div class="r" style="left:4px;top:185px;width:347px;height:1px;background:#c8c8c8;"></div>
<div class="r" style="left:4px;top:205px;width:347px;height:1px;background:#c8c8c8;"></div>
<div class="r" style="left:4px;top:225px;width:347px;height:1px;background:#c8c8c8;"></div>
<div class="r" style="left:4px;top:245px;width:347px;height:1px;background:#c8c8c8;"></div>
<div class="r" style="left:4px;top:265px;width:347px;height:1px;background:#c8c8c8;"></div>
<div class="r" style="left:4px;top:285px;width:347px;height:1px;background:#c8c8c8;"></div>
<div class="r" style="left:4px;top:305px;width:347px;height:1px;background:#c8c8c8;"></div>
<div class="r" style="left:4px;top:325px;width:347px;height:1px;background:#c8c8c8;"></div>
<div class="r" style="left:4px;top:345px;width:347px;height:1px;background:#c8c8c8;"></div>
<div class="r" style="left:4px;top:365px;width:347px;height:1px;background:#c8c8c8;"></div>
<div class="r" style="left:4px;top:385px;width:347px;height:1px;background:#c8c8c8;"></div>
<div class="r" style="left:4px;top:405px;width:347px;height:1px;background:#c8c8c8;"></div>
<div class="r" style="left:103px;top:146px;width:1px;height:277px;background:#c8c8c8;"></div>
<div class="r" style="left:153px;top:146px;width:1px;height:277px;background:#c8c8c8;"></div>
<div class="r" style="left:203px;top:146px;width:1px;height:277px;background:#c8c8c8;"></div>
<div class="r" style="left:238px;top:146px;width:1px;height:277px;background:#c8c8c8;"></div>
<div class="r" style="left:298px;top:146px;width:1px;height:277px;background:#c8c8c8;"></div>
<div class="r" style="left:352px;top:122px;width:17px;height:301px;background:#f0f0f0;"></div><svg style="left:352px;top:122px" width="17" height="301"><path d="M5 11l3.5-3.5 3.5 3.5z" fill="#606060"/><path d="M5 290l3.5 3.5 3.5-3.5z" fill="#606060"/></svg><div class="r" style="left:352.5px;top:141px;width:15px;height:71px;box-sizing:border-box;border:1px solid #989898;border-radius:2px;background:linear-gradient(90deg,#f4f4f4 0,#e9e9e9 45%,#d6d6d6 50%,#dcdcdc 100%);"></div><div class="r" style="left:356.5px;top:174.0px;width:7px;height:1px;background:#5e5e5e;"></div><div class="r" style="left:356.5px;top:176.0px;width:7px;height:1px;background:#5e5e5e;"></div><div class="r" style="left:356.5px;top:178.0px;width:7px;height:1px;background:#5e5e5e;"></div>
<div class="r" style="left:3px;top:423px;width:366px;height:1px;background:#000;"></div>
<div class="r" style="left:6px;top:423px;width:73px;height:20px;box-sizing:border-box;border:1px solid #000;border-top:none;background:#fff;box-shadow:1px 1px 0 #000;"></div>
<div class="t" style="left:16.50px;top:427.00px;font-size:12px;line-height:12px;color:#000;letter-spacing:0.087px;">Символы</div>
<div class="t" style="left:89.00px;top:427.00px;font-size:12px;line-height:12px;color:#7a7a7a;letter-spacing:-0.273px;">Детали</div>
<div class="r" style="left:138px;top:427px;width:1px;height:13px;background:#6a6a6a;"></div>
<div class="t" style="left:148.50px;top:427.00px;font-size:12px;line-height:12px;color:#7a7a7a;letter-spacing:0.110px;">Торговля</div>
<div class="r" style="left:210px;top:427px;width:1px;height:13px;background:#6a6a6a;"></div>
<div class="t" style="left:220.00px;top:427.00px;font-size:12px;line-height:12px;color:#7a7a7a;letter-spacing:0.260px;">Тики</div>
<div class="r" style="left:0px;top:445px;width:372px;height:3px;background:#fcfcfc;"></div>
<div class="r" style="left:0px;top:448px;width:372px;height:1px;background:#a0a0a0;"></div><div class="r" style="left:3px;top:451px;width:352px;height:13px;background:linear-gradient(90deg,#bccbdc 0,#c8d6e5 55%,#d5e3f0 100%);"></div><div class="t" style="left:5.70px;top:451.00px;font-size:12px;line-height:12px;color:#4a4a4a;letter-spacing:-0.461px;">Навигатор</div>
<svg style="left:359.5px;top:453.5px" width="8" height="8"><path d="M0.8 0.8L6.2 6.2M6.2 0.8L0.8 6.2" stroke="#000" stroke-width="1.7"/></svg>
<div class="r" style="left:3px;top:465px;width:365px;height:303px;box-sizing:border-box;border:1px solid #828790;border-bottom:none;background:#fff;"></div>
<div class="r" style="left:352px;top:466px;width:17px;height:301px;background:#f0f0f0;"></div><svg style="left:352px;top:466px" width="17" height="301"><path d="M5 11l3.5-3.5 3.5 3.5z" fill="#606060"/><path d="M5 290l3.5 3.5 3.5-3.5z" fill="#606060"/></svg><div class="r" style="left:352.5px;top:733px;width:15px;height:16px;box-sizing:border-box;border:1px solid #989898;border-radius:2px;background:linear-gradient(90deg,#f4f4f4 0,#e9e9e9 45%,#d6d6d6 50%,#dcdcdc 100%);"></div><div class="r" style="left:356.5px;top:738.5px;width:7px;height:1px;background:#5e5e5e;"></div><div class="r" style="left:356.5px;top:740.5px;width:7px;height:1px;background:#5e5e5e;"></div><div class="r" style="left:356.5px;top:742.5px;width:7px;height:1px;background:#5e5e5e;"></div>
<svg style="left:0;top:0" width="372" height="790"><path d="M16.5 466V736" stroke="#9a9a9a" stroke-width="1" stroke-dasharray="1 1"/><path d="M58.5 466V491" stroke="#9a9a9a" stroke-width="1" stroke-dasharray="1 1"/><path d="M79.5 466V476" stroke="#9a9a9a" stroke-width="1" stroke-dasharray="1 1"/><path d="M80 476.5H91" stroke="#9a9a9a" stroke-width="1" stroke-dasharray="1 1"/><path d="M63 496.5H70" stroke="#9a9a9a" stroke-width="1" stroke-dasharray="1 1"/><path d="M79.5 506V516" stroke="#9a9a9a" stroke-width="1" stroke-dasharray="1 1"/><path d="M80 516.5H91" stroke="#9a9a9a" stroke-width="1" stroke-dasharray="1 1"/><path d="M17 536.5H28" stroke="#9a9a9a" stroke-width="1" stroke-dasharray="1 1"/><path d="M21 556.5H28" stroke="#9a9a9a" stroke-width="1" stroke-dasharray="1 1"/><path d="M37.5 564V696" stroke="#9a9a9a" stroke-width="1" stroke-dasharray="1 1"/><path d="M38 576.5H48" stroke="#9a9a9a" stroke-width="1" stroke-dasharray="1 1"/><path d="M38 596.5H48" stroke="#9a9a9a" stroke-width="1" stroke-dasharray="1 1"/><path d="M38 616.5H48" stroke="#9a9a9a" stroke-width="1" stroke-dasharray="1 1"/><path d="M38 636.5H48" stroke="#9a9a9a" stroke-width="1" stroke-dasharray="1 1"/><path d="M38 656.5H48" stroke="#9a9a9a" stroke-width="1" stroke-dasharray="1 1"/><path d="M38 676.5H48" stroke="#9a9a9a" stroke-width="1" stroke-dasharray="1 1"/><path d="M38 696.5H48" stroke="#9a9a9a" stroke-width="1" stroke-dasharray="1 1"/><path d="M21 716.5H27" stroke="#9a9a9a" stroke-width="1" stroke-dasharray="1 1"/><path d="M21 736.5H27" stroke="#9a9a9a" stroke-width="1" stroke-dasharray="1 1"/><path d="M37.5 744V756" stroke="#9a9a9a" stroke-width="1" stroke-dasharray="1 1"/><path d="M38 756.5H48" stroke="#9a9a9a" stroke-width="1" stroke-dasharray="1 1"/><rect x="54.5" y="492.5" width="8" height="8" rx="1" fill="#fff" stroke="#919191" stroke-width="1"/><path d="M56.0 496.5h5" stroke="#2c3f9a" stroke-width="1"/><rect x="12.5" y="552.5" width="8" height="8" rx="1" fill="#fff" stroke="#919191" stroke-width="1"/><path d="M14.0 556.5h5" stroke="#2c3f9a" stroke-width="1"/><rect x="12.5" y="712.5" width="8" height="8" rx="1" fill="#fff" stroke="#919191" stroke-width="1"/><path d="M14.0 716.5h5" stroke="#2c3f9a" stroke-width="1"/><path d="M16.5 714.0v5" stroke="#2c3f9a" stroke-width="1"/><rect x="12.5" y="732.5" width="8" height="8" rx="1" fill="#fff" stroke="#919191" stroke-width="1"/><path d="M14.0 736.5h5" stroke="#2c3f9a" stroke-width="1"/><path d="M96.6 470.9h7.8v9.2h-7.8z" fill="#ffd000" stroke="#e2a30a" stroke-width="1.2" stroke-linejoin="round"/><path d="M94.6 477.7h7.6v0.9a1.5 1.5 0 0 1 -1.5 1.5H95.9a1.4 1.4 0 0 1 -1.3-1.5z" fill="#ffd000" stroke="#e2a30a" stroke-width="1.2" stroke-linejoin="round"/><path d="M72.5 489.5h5.5l1.2 2h7.8v10.5h-14.5z" fill="#fbc70f" stroke="#dd9a1a" stroke-width="1"/><path d="M72.5 492h6.5" stroke="#dd9a1a" stroke-width="1"/><path d="M96.6 510.9h7.8v9.2h-7.8z" fill="#ffd000" stroke="#e2a30a" stroke-width="1.2" stroke-linejoin="round"/><path d="M94.6 517.7h7.6v0.9a1.5 1.5 0 0 1 -1.5 1.5H95.9a1.4 1.4 0 0 1 -1.3-1.5z" fill="#ffd000" stroke="#e2a30a" stroke-width="1.2" stroke-linejoin="round"/><path d="M35.1 529.2 L38.9 529.2 L38.9 531.0 L40.3 531.9 L42.0 530.9 L43.9 534.2 L42.2 535.1 L42.2 536.8 L43.9 537.8 L42.0 541.1 L40.4 540.1 L38.9 540.9 L38.9 542.8 L35.1 542.8 L35.1 541.0 L33.7 540.1 L32.0 541.1 L30.1 537.8 L31.8 536.9 L31.8 535.2 L30.1 534.2 L32.0 530.9 L33.6 531.9 L35.1 531.1z" fill="#c5e3fa" stroke="#1a73b8" stroke-width="1.2" stroke-linejoin="round"/><path d="M35.4 533.4l4.2 2.6-4.2 2.6z" fill="#e8f4fd" stroke="#1a73b8" stroke-width="1.1" stroke-linejoin="round"/><path d="M35.2 555.4v-3.2a2.1 2.1 0 0 1 4.2 0v3.2" fill="none" stroke="#dd9a1a" stroke-width="1.1"/><path d="M33 553.4h8.6l.8 8.6H32.2z" fill="#ffd000" stroke="#dd9a1a" stroke-width="1.1" stroke-linejoin="round"/><path d="M35.2 555.6v-2M39.4 555.6v-2" stroke="#dd9a1a" stroke-width="1.1"/><path d="M54.5 575v4.2c2.5 1.8 6.5 1.8 9 0v-4.2" fill="#c5e3fa" stroke="#1a73b8" stroke-width="1.2"/><path d="M51.8 573.2L59 570.2l7.2 3-7.2 3z" fill="#c5e3fa" stroke="#1a73b8" stroke-width="1.2" stroke-linejoin="round"/><path d="M52.6 573.8v6.6" stroke="#1a73b8" stroke-width="1.2"/><circle cx="52.6" cy="581" r="1.1" fill="#1a73b8"/><path d="M52.5 600.5c1.6-1 2.6-8.6 4.5-8.6s2.5 6.6 4 6.6 2.6-4.6 3.6-7.6" fill="none" stroke="#2a7fc4" stroke-width="1.15"/><path d="M52 597.1L65.2 593.3" fill="none" stroke="#16ae2e" stroke-width="1.3" stroke-dasharray="3 1.4"/><path d="M52.6 614.6L58.5 609.9l5.9 4.7z" fill="#ffd000" stroke="#dd9a1a" stroke-width="1" stroke-linejoin="round"/><rect x="53.6" y="614.8" width="9.8" height="5.4" fill="#ffd000" stroke="#dd9a1a" stroke-width="1"/><path d="M56 615v5M58.5 615v5M61 615v5" stroke="#dd9a1a" stroke-width="1"/><rect x="52.2" y="620.2" width="12.6" height="1.8" rx="0.6" fill="#ffd000" stroke="#dd9a1a" stroke-width="1"/><g transform="translate(58.6 636.2) scale(0.8) translate(-58.5 -636.5)"><path d="M52.5 641.5l5.2-5.4a3.6 3.6 0 0 1 4.6-4.6l-2.2 2.3 .4 1.9 1.9 .4 2.2-2.3a3.6 3.6 0 0 1 -4.6 4.7l-5.2 5.3a1.5 1.5 0 0 1 -2.3-2.3z" fill="#c5e3fa" stroke="#1a73b8" stroke-width="1.5" stroke-linejoin="round"/></g><path d="M58.0 649.4 L59.7 654.1 L64.7 654.2 L60.8 657.3 L62.1 662.1 L58.0 659.3 L53.9 662.1 L55.2 657.3 L51.3 654.2 L56.3 654.1z" fill="#f8b616" stroke="#e9a010" stroke-width="0.8" stroke-linejoin="round"/><circle cx="58" cy="676" r="6.2" fill="#dff8e2" stroke="#19b432" stroke-width="1.3"/><path d="M55 676.2l2.2 2.3 4-4.4" fill="none" stroke="#19b432" stroke-width="1.4"/><path d="M54 691.0h9.5M54 696.0h7M54 701.0h4.5" stroke="#1a73b8" stroke-width="1.2"/><circle cx="37" cy="716.5" r="1.3" fill="#1a73b8"/><path d="M33.8 713.7a4.3 4.3 0 0 0 0 5.6M40.2 713.7a4.3 4.3 0 0 1 0 5.6M31.2 711.9a7.4 7.4 0 0 0 0 9.2M42.8 711.9a7.4 7.4 0 0 1 0 9.2" fill="none" stroke="#1a73b8" stroke-width="1.2"/><path d="M32.6 738.2a2.9 2.9 0 0 1 -.3-5.7 4.3 4.3 0 0 1 8.1-1.2 3.5 3.5 0 0 1 .7 6.9z" fill="#dff0fc" stroke="#1a73b8" stroke-width="1.2"/><path d="M36.5 738.5v2.2M30 741.6h13" stroke="#1a73b8" stroke-width="1.2"/><circle cx="36.5" cy="741.6" r="1.2" fill="#1a73b8"/><path d="M54 751.0h9.5M54 756.0h7M54 761.0h4.5" stroke="#1a73b8" stroke-width="1.2"/></svg>
<div class="t" style="left:114.50px;top:470.00px;font-size:12px;line-height:12px;color:#000;letter-spacing:-0.336px;">Remnant 3D</div>
<div class="t" style="left:93.00px;top:490.00px;font-size:12px;line-height:12px;color:#000;">SymbolInfo</div>
<div class="t" style="left:114.50px;top:510.00px;font-size:12px;line-height:12px;color:#000;letter-spacing:-0.169px;">SymbolInfoSample</div>
<div class="t" style="left:51.50px;top:530.00px;font-size:12px;line-height:12px;color:#000;letter-spacing:-0.107px;">Сервисы</div>
<div class="t" style="left:51.50px;top:550.00px;font-size:12px;line-height:12px;color:#000;letter-spacing:-0.081px;">Маркет</div>
<div class="t" style="left:72.00px;top:570.00px;font-size:12px;line-height:12px;color:#000;letter-spacing:-0.085px;">Эксперты</div>
<div class="t" style="left:72.00px;top:590.00px;font-size:12px;line-height:12px;color:#000;letter-spacing:-0.089px;">Индикаторы</div>
<div class="t" style="left:72.00px;top:610.00px;font-size:12px;line-height:12px;color:#000;letter-spacing:-0.005px;">Библиотеки</div>
<div class="t" style="left:72.00px;top:630.00px;font-size:12px;line-height:12px;color:#000;letter-spacing:-0.102px;">Утилиты</div>
<div class="t" style="left:72.00px;top:650.00px;font-size:12px;line-height:12px;color:#000;letter-spacing:-0.087px;">Избранное</div>
<div class="t" style="left:72.00px;top:670.00px;font-size:12px;line-height:12px;color:#000;letter-spacing:0.332px;">Мои покупки</div>
<div class="t" style="left:72.00px;top:690.00px;font-size:12px;line-height:12px;color:#000;letter-spacing:-0.050px;">Как это работает</div>
<div class="t" style="left:51.50px;top:710.00px;font-size:12px;line-height:12px;color:#000;letter-spacing:-0.104px;">Сигналы</div>
<div class="t" style="left:51.50px;top:730.00px;font-size:12px;line-height:12px;color:#000;letter-spacing:-1.338px;">VPS</div>
<div class="t" style="left:72.00px;top:750.00px;font-size:12px;line-height:12px;color:#000;letter-spacing:-0.050px;">Как это работает</div>
<div class="r" style="left:3px;top:767px;width:366px;height:1px;background:#000;"></div>
<div class="r" style="left:6px;top:767px;width:60px;height:20px;box-sizing:border-box;border:1px solid #000;border-top:none;background:#fff;box-shadow:1px 1px 0 #000;"></div>
<div class="t" style="left:16.50px;top:771.00px;font-size:12px;line-height:12px;color:#000;letter-spacing:0.108px;">Общие</div>
<div class="t" style="left:76.00px;top:771.00px;font-size:12px;line-height:12px;color:#7a7a7a;letter-spacing:0.077px;">Избранное</div><div class="r" style="left:377px;top:107px;width:193px;height:13px;background:linear-gradient(90deg,#bccbdc 0,#c8d6e5 55%,#d5e3f0 100%);"></div><div class="t" style="left:379.70px;top:107.00px;font-size:12px;line-height:12px;color:#4a4a4a;letter-spacing:-0.479px;">Окно данных</div>
<svg style="left:574.5px;top:109.5px" width="8" height="8"><path d="M0.8 0.8L6.2 6.2M6.2 0.8L0.8 6.2" stroke="#000" stroke-width="1.7"/></svg>
<div class="r" style="left:377px;top:121px;width:207px;height:669px;box-sizing:border-box;border:1px solid #a0a0a0;border-top:none;background:#fff;"></div>
<div class="r" style="left:586px;top:106px;width:1px;height:684px;background:#a0a0a0;"></div>
<svg style="left:380px;top:124px" width="15" height="15"><path d="M0.5 0v13.5h14" fill="none" stroke="#9a9a9a" stroke-width="1"/><path d="M2.5 6.6l3.2-2.6 3.6 4.4 5-4.2" fill="none" stroke="#1a73b8" stroke-width="1.3"/></svg>
<div class="t" style="left:399.00px;top:126.00px;font-size:12px;line-height:12px;color:#000;letter-spacing:-0.473px;">USDCHFrfd,H1</div>
<div class="r" style="left:378px;top:141px;width:205px;height:20px;background:#ececec;"></div>
<div class="t" style="left:399.00px;top:146.00px;font-size:12px;line-height:12px;color:#000;letter-spacing:-0.337px;">Date</div>
<div class="t" style="left:524.08px;top:146.00px;font-size:12px;line-height:12px;color:#000;letter-spacing:-0.516px;">2022.11.24</div>
<div class="t" style="left:399.00px;top:166.00px;font-size:12px;line-height:12px;color:#000;letter-spacing:-0.305px;">Time</div>
<div class="t" style="left:550.99px;top:166.00px;font-size:12px;line-height:12px;color:#000;letter-spacing:-0.605px;">10:00</div>
<div class="r" style="left:378px;top:181px;width:205px;height:20px;background:#ececec;"></div>
<div class="t" style="left:399.00px;top:186.00px;font-size:12px;line-height:12px;color:#000;letter-spacing:-0.088px;">Open</div>
<div class="t" style="left:538.98px;top:186.00px;font-size:12px;line-height:12px;color:#000;letter-spacing:-0.625px;">0.94061</div>
<div class="t" style="left:399.00px;top:206.00px;font-size:12px;line-height:12px;color:#000;letter-spacing:0.330px;">High</div>
<div class="t" style="left:538.98px;top:206.00px;font-size:12px;line-height:12px;color:#000;letter-spacing:-0.625px;">0.94153</div>
<div class="r" style="left:378px;top:221px;width:205px;height:20px;background:#ececec;"></div>
<div class="t" style="left:399.00px;top:226.00px;font-size:12px;line-height:12px;color:#000;">Low</div>
<div class="t" style="left:538.98px;top:226.00px;font-size:12px;line-height:12px;color:#000;letter-spacing:-0.625px;">0.94014</div>
<div class="t" style="left:399.00px;top:246.00px;font-size:12px;line-height:12px;color:#000;letter-spacing:-0.536px;">Close</div>
<div class="t" style="left:538.98px;top:246.00px;font-size:12px;line-height:12px;color:#000;letter-spacing:-0.625px;">0.94132</div>
<div class="r" style="left:378px;top:261px;width:205px;height:20px;background:#ececec;"></div>
<div class="t" style="left:399.00px;top:266.00px;font-size:12px;line-height:12px;color:#000;">Volume</div>
<div class="t" style="left:571.93px;top:266.00px;font-size:12px;line-height:12px;color:#000;">0</div>
<div class="t" style="left:399.00px;top:286.00px;font-size:12px;line-height:12px;color:#000;letter-spacing:-0.083px;">Tick Volume</div>
<div class="t" style="left:553.93px;top:286.00px;font-size:12px;line-height:12px;color:#000;letter-spacing:-0.673px;">4450</div>
<div class="r" style="left:378px;top:301px;width:205px;height:20px;background:#ececec;"></div>
<div class="t" style="left:399.00px;top:306.00px;font-size:12px;line-height:12px;color:#000;letter-spacing:-0.449px;">Spread</div>
<div class="t" style="left:565.93px;top:306.00px;font-size:12px;line-height:12px;color:#000;letter-spacing:-0.673px;">20</div>
<svg style="left:380px;top:324px" width="15" height="15"><path d="M0.5 0v13.5h14" fill="none" stroke="#9a9a9a" stroke-width="1"/><path d="M2.5 6.6l3.2-2.6 3.6 4.4 5-4.2" fill="none" stroke="#1a73b8" stroke-width="1.3"/></svg>
<div class="t" style="left:399.00px;top:326.00px;font-size:12px;line-height:12px;color:#000;letter-spacing:-0.073px;">Окно индикат...</div>
<div class="r" style="left:378px;top:341px;width:205px;height:20px;background:#ececec;"></div>
<svg style="left:380px;top:344px" width="16" height="16"><path d="M1.5 11.5c1.6-1 2.6-8.6 4.5-8.6s2.5 6.6 4 6.6 2.6-4.6 3.6-7.6" fill="none" stroke="#2a7fc4" stroke-width="1.15"/><path d="M1 8.1L14.2 4.3" fill="none" stroke="#16ae2e" stroke-width="1.3" stroke-dasharray="3 1.4"/></svg>
<div class="t" style="left:399.00px;top:346.00px;font-size:12px;line-height:12px;color:#000;letter-spacing:-0.546px;">Fast RSI MA</div>
<div class="t" style="left:532.97px;top:346.00px;font-size:12px;line-height:12px;color:#000;letter-spacing:-0.631px;">31.99818</div>
<svg style="left:380px;top:364px" width="16" height="16"><path d="M1.5 11.5c1.6-1 2.6-8.6 4.5-8.6s2.5 6.6 4 6.6 2.6-4.6 3.6-7.6" fill="none" stroke="#2a7fc4" stroke-width="1.15"/><path d="M1 8.1L14.2 4.3" fill="none" stroke="#16ae2e" stroke-width="1.3" stroke-dasharray="3 1.4"/></svg>
<div class="t" style="left:399.00px;top:366.00px;font-size:12px;line-height:12px;color:#000;letter-spacing:-0.426px;">Slow RSI MA</div>
<div class="t" style="left:532.97px;top:366.00px;font-size:12px;line-height:12px;color:#000;letter-spacing:-0.631px;">26.46783</div>
<div class="r" style="left:378px;top:381px;width:205px;height:20px;background:#ececec;"></div>
<svg style="left:380px;top:384px" width="16" height="16"><path d="M1.5 11.5c1.6-1 2.6-8.6 4.5-8.6s2.5 6.6 4 6.6 2.6-4.6 3.6-7.6" fill="none" stroke="#2a7fc4" stroke-width="1.15"/><path d="M1 8.1L14.2 4.3" fill="none" stroke="#16ae2e" stroke-width="1.3" stroke-dasharray="3 1.4"/></svg>
<div class="t" style="left:399.00px;top:386.00px;font-size:12px;line-height:12px;color:#000;letter-spacing:-0.892px;">BUY</div>
<div class="t" style="left:532.97px;top:386.00px;font-size:12px;line-height:12px;color:#000;letter-spacing:-0.631px;">26.46783</div>
<svg style="left:380px;top:404px" width="16" height="16"><path d="M1.5 11.5c1.6-1 2.6-8.6 4.5-8.6s2.5 6.6 4 6.6 2.6-4.6 3.6-7.6" fill="none" stroke="#2a7fc4" stroke-width="1.15"/><path d="M1 8.1L14.2 4.3" fill="none" stroke="#16ae2e" stroke-width="1.3" stroke-dasharray="3 1.4"/></svg>
<div class="t" style="left:399.00px;top:406.00px;font-size:12px;line-height:12px;color:#000;letter-spacing:-1.339px;">SELL</div>
<div class="r" style="left:378px;top:141px;width:205px;height:1px;background:#c8c8c8;"></div>
<div class="r" style="left:378px;top:161px;width:205px;height:1px;background:#c8c8c8;"></div>
<div class="r" style="left:378px;top:181px;width:205px;height:1px;background:#c8c8c8;"></div>
<div class="r" style="left:378px;top:201px;width:205px;height:1px;background:#c8c8c8;"></div>
<div class="r" style="left:378px;top:221px;width:205px;height:1px;background:#c8c8c8;"></div>
<div class="r" style="left:378px;top:241px;width:205px;height:1px;background:#c8c8c8;"></div>
<div class="r" style="left:378px;top:261px;width:205px;height:1px;background:#c8c8c8;"></div>
<div class="r" style="left:378px;top:281px;width:205px;height:1px;background:#c8c8c8;"></div>
<div class="r" style="left:378px;top:301px;width:205px;height:1px;background:#c8c8c8;"></div>
<div class="r" style="left:378px;top:321px;width:205px;height:1px;background:#c8c8c8;"></div>
<div class="r" style="left:378px;top:341px;width:205px;height:1px;background:#c8c8c8;"></div>
<div class="r" style="left:378px;top:361px;width:205px;height:1px;background:#c8c8c8;"></div>
<div class="r" style="left:378px;top:381px;width:205px;height:1px;background:#c8c8c8;"></div>
<div class="r" style="left:378px;top:401px;width:205px;height:1px;background:#c8c8c8;"></div>
<div class="r" style="left:378px;top:421px;width:205px;height:1px;background:#c8c8c8;"></div>
<div class="r" style="left:487px;top:121px;width:1px;height:300px;background:#c8c8c8;"></div>
<div class="r" style="left:378px;top:121px;width:205px;height:1px;background:#d0d0d0;"></div><div class="r" style="left:588px;top:105px;width:1327px;height:1px;background:#7a7a7a;"></div>
<div class="r" style="left:588px;top:106px;width:1px;height:667px;background:#3a3a3a;"></div>
<div class="r" style="left:589px;top:106px;width:1326px;height:667px;background:#000;"></div>
<svg style="left:0;top:0" width="1915" height="817"><path d="M623.5 109V535M623.5 538V751M655.5 109V535M655.5 538V751M687.5 109V535M687.5 538V751M719.5 109V535M719.5 538V751M751.5 109V535M751.5 538V751M783.5 109V535M783.5 538V751M815.5 109V535M815.5 538V751M847.5 109V535M847.5 538V751M879.5 109V535M879.5 538V751M911.5 109V535M911.5 538V751M943.5 109V535M943.5 538V751M975.5 109V535M975.5 538V751M1007.5 109V535M1007.5 538V751M1039.5 109V535M1039.5 538V751M1071.5 109V535M1071.5 538V751M1103.5 109V535M1103.5 538V751M1135.5 109V535M1135.5 538V751M1167.5 109V535M1167.5 538V751M1199.5 109V535M1199.5 538V751M1231.5 109V535M1231.5 538V751M1263.5 109V535M1263.5 538V751M1295.5 109V535M1295.5 538V751M1327.5 109V535M1327.5 538V751M1359.5 109V535M1359.5 538V751M1391.5 109V535M1391.5 538V751M1423.5 109V535M1423.5 538V751M1455.5 109V535M1455.5 538V751M1487.5 109V535M1487.5 538V751M1519.5 109V535M1519.5 538V751M1551.5 109V535M1551.5 538V751M1583.5 109V535M1583.5 538V751M1615.5 109V535M1615.5 538V751M1647.5 109V535M1647.5 538V751M1679.5 109V535M1679.5 538V751M1711.5 109V535M1711.5 538V751M1743.5 109V535M1743.5 538V751M1775.5 109V535M1775.5 538V751M1807.5 109V535M1807.5 538V751M1839.5 109V535M1839.5 538V751M592 119.5H1865M592 151.5H1865M592 183.5H1865M592 215.5H1865M592 247.5H1865M592 279.5H1865M592 311.5H1865M592 343.5H1865M592 375.5H1865M592 407.5H1865M592 439.5H1865M592 471.5H1865M592 503.5H1865M592 741.5H1865" stroke="#71859a" stroke-width="1" stroke-dasharray="3 3" fill="none" shape-rendering="crispEdges"/><path d="M592 393.5H1865" stroke="#8796a8" stroke-width="1" shape-rendering="crispEdges"/><path d="M599.5 535V520M607.5 535V531M615.5 535V529M623.5 535V526M631.5 535V527M639.5 535V522M647.5 535V521M655.5 535V525M663.5 535V528M671.5 535V525M679.5 535V524M687.5 535V518M695.5 535V508M703.5 535V514M711.5 535V512M719.5 535V510M727.5 535V505M735.5 535V494M743.5 535V500M751.5 535V504M759.5 535V511M767.5 535V513M775.5 535V520M783.5 535V521M791.5 535V523M799.5 535V532M807.5 535V531M815.5 535V516M823.5 535V527M831.5 535V520M839.5 535V522M847.5 535V523M855.5 535V526M863.5 535V527M871.5 535V525M879.5 535V515M887.5 535V507M895.5 535V510M903.5 535V516M911.5 535V516M919.5 535V517M927.5 535V508M935.5 535V506M943.5 535V505M951.5 535V515M959.5 535V520M967.5 535V524M975.5 535V525M983.5 535V522M991.5 535V521M999.5 535V525M1007.5 535V519M1015.5 535V521M1023.5 535V527M1031.5 535V526M1039.5 535V523M1047.5 535V521M1055.5 535V516M1063.5 535V510M1071.5 535V509M1079.5 535V514M1087.5 535V516M1095.5 535V514M1103.5 535V513M1111.5 535V510M1119.5 535V510M1127.5 535V519M1135.5 535V518M1143.5 535V524M1151.5 535V527M1159.5 535V525M1167.5 535V531M1175.5 535V533M1183.5 535V520M1191.5 535V527M1199.5 535V524M1207.5 535V525M1215.5 535V527M1223.5 535V528M1231.5 535V525M1239.5 535V524M1247.5 535V519M1255.5 535V510M1263.5 535V512M1271.5 535V519M1279.5 535V519M1287.5 535V519M1295.5 535V515M1303.5 535V510M1311.5 535V511M1319.5 535V518M1327.5 535V524M1335.5 535V523M1343.5 535V526M1351.5 535V526M1359.5 535V529M1367.5 535V533M1375.5 535V521M1383.5 535V528M1391.5 535V523M1399.5 535V524M1407.5 535V528M1415.5 535V531M1423.5 535V528M1431.5 535V527M1439.5 535V517M1447.5 535V512M1455.5 535V518M1463.5 535V522M1471.5 535V524M1479.5 535V520M1487.5 535V505M1495.5 535V504M1503.5 535V494M1511.5 535V511M1519.5 535V518M1527.5 535V519M1535.5 535V494M1543.5 535V518M1551.5 535V528M1559.5 535V532M1567.5 535V518M1575.5 535V525M1583.5 535V520M1591.5 535V523M1599.5 535V523M1607.5 535V525M1615.5 535V525M1623.5 535V523M1631.5 535V516M1639.5 535V509M1647.5 535V515M1655.5 535V514M1663.5 535V518M1671.5 535V514M1679.5 535V511M1687.5 535V513M1695.5 535V515M1703.5 535V521M1711.5 535V527M1719.5 535V531M1727.5 535V529M1735.5 535V525M1743.5 535V527M1751.5 535V533M1759.5 535V512M1767.5 535V522M1775.5 535V522M1783.5 535V525M1791.5 535V525M1799.5 535V524M1807.5 535V523M1815.5 535V521M1823.5 535V517M1831.5 535V505M1839.5 535V506M1847.5 535V512M1855.5 535V532" stroke="#32cd32" stroke-width="1" shape-rendering="crispEdges"/><path d="M591.5 379V392M599.5 381V401M607.5 374V388M615.5 386V396M623.5 384V399M631.5 381V396M639.5 366V390M647.5 352V374M655.5 346V365M663.5 347V363M671.5 347V372M679.5 367V391M687.5 349V393M685 384.5H690M695.5 363V408M703.5 326V370M711.5 274V344M719.5 289V321M727.5 281V341M735.5 250V314M743.5 230V278M751.5 198V250M759.5 192V226M767.5 220V256M775.5 240V273M783.5 249V266M791.5 249V265M799.5 255V266M807.5 249V271M815.5 240V269M823.5 238V266M831.5 249V267M839.5 250V273M847.5 250V281M855.5 246V274M863.5 248V262M871.5 244V265M879.5 239V280M887.5 237V274M895.5 256V295M903.5 260V279M911.5 236V279M919.5 225V264M927.5 224V261M935.5 211V244M943.5 208V283M951.5 247V287M959.5 221V254M967.5 220V239M975.5 217V231M973 228.5H978M983.5 226V238M991.5 222V246M999.5 208V236M1007.5 198V227M1015.5 194V218M1023.5 198V218M1031.5 189V218M1039.5 182V197M1047.5 165V200M1055.5 162V195M1063.5 164V196M1071.5 129V184M1079.5 122V149M1087.5 139V171M1095.5 134V157M1103.5 137V168M1111.5 140V179M1119.5 134V186M1127.5 134V158M1135.5 128V147M1143.5 124V145M1151.5 127V138M1159.5 121V143M1167.5 125V137M1175.5 138V148M1183.5 138V157M1191.5 139V164M1199.5 161V185M1207.5 165V180M1215.5 172V182M1223.5 172V185M1231.5 155V179M1239.5 162V178M1237 163.5H1242M1247.5 158V178M1255.5 149V183M1263.5 166V201M1271.5 191V232M1279.5 200V225M1287.5 197V235M1295.5 226V276M1303.5 242V265M1301 259.5H1306M1311.5 244V270M1319.5 220V252M1327.5 223V256M1335.5 245V269M1343.5 246V264M1351.5 248V262M1359.5 256V266M1367.5 259V270M1365 263.5H1370M1375.5 252V275M1383.5 262V286M1391.5 254V276M1399.5 260V282M1407.5 258V282M1415.5 255V264M1423.5 258V287M1431.5 272V286M1429 278.5H1434M1439.5 269V300M1447.5 250V294M1455.5 239V278M1463.5 233V270M1471.5 240V275M1479.5 262V306M1487.5 292V325M1495.5 303V391M1503.5 358V428M1511.5 397V427M1519.5 388V416M1527.5 382V408M1535.5 385V444M1543.5 423V435M1541 431.5H1546M1551.5 420V429M1559.5 420V433M1567.5 422V450M1575.5 432V451M1573 446.5H1578M1583.5 440V467M1591.5 451V471M1599.5 460V487M1607.5 467V484M1615.5 469V485M1623.5 450V479M1631.5 436V461M1639.5 393V442M1647.5 388V423M1655.5 385V421M1663.5 386V426M1671.5 386V429M1679.5 393V441M1687.5 412V440M1695.5 394V429M1703.5 396V411M1711.5 397V411M1719.5 402V411M1727.5 402V407M1735.5 406V416M1733 406.5H1738M1743.5 400V411M1751.5 402V422M1759.5 398V419M1757 403.5H1762M1767.5 383V406M1775.5 388V405M1783.5 394V409M1781 397.5H1786M1791.5 390V409M1799.5 406V426M1807.5 393V414M1815.5 385V399M1823.5 366V402M1831.5 365V419M1839.5 360V414M1847.5 375V415M1855.5 391V404" stroke="#00ff00" stroke-width="1" fill="none" shape-rendering="crispEdges"/><path d="M597.5 390.5H601.5V393.5H597.5zM605.5 380.5H609.5V385.5H605.5zM621.5 387.5H625.5V392.5H621.5zM629.5 383.5H633.5V386.5H629.5zM637.5 370.5H641.5V382.5H637.5zM645.5 364.5H649.5V369.5H645.5zM653.5 360.5H657.5V363.5H653.5zM661.5 350.5H665.5V358.5H661.5zM693.5 367.5H697.5V383.5H693.5zM701.5 337.5H705.5V365.5H701.5zM709.5 293.5H713.5V336.5H709.5zM725.5 293.5H729.5V317.5H725.5zM733.5 256.5H737.5V292.5H733.5zM741.5 230.5H745.5V255.5H741.5zM749.5 208.5H753.5V229.5H749.5zM781.5 257.5H785.5V261.5H781.5zM789.5 256.5H793.5V257.5H789.5zM797.5 255.5H801.5V259.5H797.5zM813.5 241.5H817.5V253.5H813.5zM837.5 256.5H841.5V264.5H837.5zM853.5 250.5H857.5V272.5H853.5zM885.5 269.5H889.5V273.5H885.5zM901.5 267.5H905.5V275.5H901.5zM909.5 245.5H913.5V266.5H909.5zM917.5 229.5H921.5V244.5H917.5zM933.5 222.5H937.5V236.5H933.5zM949.5 251.5H953.5V278.5H949.5zM957.5 237.5H961.5V250.5H957.5zM965.5 228.5H969.5V237.5H965.5zM981.5 228.5H985.5V229.5H981.5zM997.5 215.5H1001.5V232.5H997.5zM1013.5 199.5H1017.5V215.5H1013.5zM1029.5 193.5H1033.5V215.5H1029.5zM1045.5 167.5H1049.5V194.5H1045.5zM1069.5 132.5H1073.5V179.5H1069.5zM1093.5 148.5H1097.5V153.5H1093.5zM1117.5 134.5H1121.5V174.5H1117.5zM1133.5 137.5H1137.5V143.5H1133.5zM1141.5 131.5H1145.5V135.5H1141.5zM1149.5 128.5H1153.5V130.5H1149.5zM1165.5 132.5H1169.5V133.5H1165.5zM1213.5 174.5H1217.5V177.5H1213.5zM1229.5 163.5H1233.5V177.5H1229.5zM1253.5 170.5H1257.5V171.5H1253.5zM1277.5 208.5H1281.5V213.5H1277.5zM1309.5 246.5H1313.5V257.5H1309.5zM1317.5 236.5H1321.5V246.5H1317.5zM1341.5 253.5H1345.5V262.5H1341.5zM1357.5 257.5H1361.5V259.5H1357.5zM1381.5 263.5H1385.5V271.5H1381.5zM1405.5 261.5H1409.5V281.5H1405.5zM1445.5 254.5H1449.5V292.5H1445.5zM1461.5 249.5H1465.5V268.5H1461.5zM1509.5 408.5H1513.5V421.5H1509.5zM1517.5 389.5H1521.5V406.5H1517.5zM1549.5 422.5H1553.5V426.5H1549.5zM1589.5 460.5H1593.5V463.5H1589.5zM1605.5 478.5H1609.5V483.5H1605.5zM1613.5 471.5H1617.5V477.5H1613.5zM1621.5 452.5H1625.5V469.5H1621.5zM1629.5 440.5H1633.5V451.5H1629.5zM1637.5 395.5H1641.5V438.5H1637.5zM1669.5 399.5H1673.5V421.5H1669.5zM1685.5 426.5H1689.5V433.5H1685.5zM1693.5 399.5H1697.5V426.5H1693.5zM1717.5 405.5H1721.5V406.5H1717.5zM1749.5 405.5H1753.5V409.5H1749.5zM1765.5 391.5H1769.5V403.5H1765.5zM1805.5 396.5H1809.5V411.5H1805.5zM1813.5 393.5H1817.5V395.5H1813.5zM1821.5 368.5H1825.5V392.5H1821.5zM1837.5 375.5H1841.5V402.5H1837.5zM1853.5 393.5H1857.5V403.5H1853.5z" stroke="#00ff00" stroke-width="1" fill="#000" shape-rendering="crispEdges"/><path d="M613.5 387.5H617.5V392.5H613.5zM669.5 350.5H673.5V371.5H669.5zM677.5 372.5H681.5V384.5H677.5zM717.5 293.5H721.5V317.5H717.5zM757.5 208.5H761.5V219.5H757.5zM765.5 220.5H769.5V241.5H765.5zM773.5 243.5H777.5V262.5H773.5zM805.5 254.5H809.5V255.5H805.5zM821.5 240.5H825.5V255.5H821.5zM829.5 256.5H833.5V263.5H829.5zM845.5 256.5H849.5V271.5H845.5zM861.5 250.5H865.5V261.5H861.5zM869.5 260.5H873.5V261.5H869.5zM877.5 260.5H881.5V273.5H877.5zM893.5 269.5H897.5V275.5H893.5zM925.5 229.5H929.5V236.5H925.5zM941.5 222.5H945.5V278.5H941.5zM989.5 223.5H993.5V234.5H989.5zM1005.5 215.5H1009.5V217.5H1005.5zM1021.5 199.5H1025.5V215.5H1021.5zM1037.5 193.5H1041.5V194.5H1037.5zM1053.5 168.5H1057.5V170.5H1053.5zM1061.5 171.5H1065.5V179.5H1061.5zM1077.5 132.5H1081.5V148.5H1077.5zM1085.5 148.5H1089.5V153.5H1085.5zM1101.5 148.5H1105.5V155.5H1101.5zM1109.5 155.5H1113.5V174.5H1109.5zM1125.5 135.5H1129.5V143.5H1125.5zM1157.5 128.5H1161.5V137.5H1157.5zM1173.5 144.5H1177.5V147.5H1173.5zM1181.5 144.5H1185.5V144.5H1181.5zM1189.5 144.5H1193.5V161.5H1189.5zM1197.5 161.5H1201.5V171.5H1197.5zM1205.5 171.5H1209.5V177.5H1205.5zM1221.5 174.5H1225.5V177.5H1221.5zM1245.5 164.5H1249.5V171.5H1245.5zM1261.5 170.5H1265.5V196.5H1261.5zM1269.5 196.5H1273.5V213.5H1269.5zM1285.5 208.5H1289.5V231.5H1285.5zM1293.5 232.5H1297.5V258.5H1293.5zM1325.5 236.5H1329.5V255.5H1325.5zM1333.5 256.5H1337.5V262.5H1333.5zM1349.5 253.5H1353.5V259.5H1349.5zM1373.5 263.5H1377.5V271.5H1373.5zM1389.5 263.5H1393.5V269.5H1389.5zM1397.5 270.5H1401.5V281.5H1397.5zM1413.5 261.5H1417.5V263.5H1413.5zM1421.5 262.5H1425.5V278.5H1421.5zM1437.5 279.5H1441.5V294.5H1437.5zM1453.5 254.5H1457.5V267.5H1453.5zM1469.5 249.5H1473.5V269.5H1469.5zM1477.5 270.5H1481.5V298.5H1477.5zM1485.5 299.5H1489.5V304.5H1485.5zM1493.5 305.5H1497.5V374.5H1493.5zM1501.5 375.5H1505.5V420.5H1501.5zM1525.5 389.5H1529.5V399.5H1525.5zM1533.5 401.5H1537.5V430.5H1533.5zM1557.5 423.5H1561.5V431.5H1557.5zM1565.5 432.5H1569.5V445.5H1565.5zM1581.5 447.5H1585.5V464.5H1581.5zM1597.5 460.5H1601.5V483.5H1597.5zM1645.5 395.5H1649.5V404.5H1645.5zM1653.5 405.5H1657.5V410.5H1653.5zM1661.5 412.5H1665.5V421.5H1661.5zM1677.5 399.5H1681.5V433.5H1677.5zM1701.5 399.5H1705.5V401.5H1701.5zM1709.5 402.5H1713.5V406.5H1709.5zM1725.5 405.5H1729.5V406.5H1725.5zM1741.5 403.5H1745.5V406.5H1741.5zM1773.5 391.5H1777.5V397.5H1773.5zM1789.5 397.5H1793.5V407.5H1789.5zM1797.5 408.5H1801.5V410.5H1797.5zM1829.5 368.5H1833.5V403.5H1829.5zM1845.5 376.5H1849.5V402.5H1845.5z" stroke="#00ff00" stroke-width="1" fill="#fff" shape-rendering="crispEdges"/><rect x="592" y="379" width="2" height="13" fill="#fff"/><polyline points="592.0,651.4 605.0,648.5 623.4,648.2 640.0,646.5 651.8,642.7 660.2,638.5 703.6,638.5 710.3,633.5 720.3,633.2 728.7,629.3 737.0,624.0 750.4,615.6 783.8,615.1 792.2,604.6 802.2,606.2 824.0,607.0 835.6,610.6 847.3,615.1 859.0,615.6 872.4,618.8 884.0,622.6 894.0,625.0 927.7,625.1 931.0,629.3 932.7,634.3 1031.3,634.3 1038.0,632.3 1044.7,628.5 1051.4,626.8 1064.8,626.3 1071.4,622.6 1167.5,622.3 1175.0,614.3 1181.7,615.1 1200.0,626.8 1211.8,631.8 1221.8,635.2 1256.0,635.4 1264.4,642.6 1281.0,651.8 1296.2,663.2 1304.5,667.7 1438.2,667.7 1447.4,674.4 1450.0,672.7 1455.8,672.2 1463.3,666.5 1487.5,666.5 1495.9,661.5 1505.0,670.2 1510.0,672.2 1535.2,672.7 1543.5,675.5 1571.0,675.5 1579.4,678.0 1601.0,681.4 1624.5,681.5 1631.6,690.5 1639.6,677.7 1649.6,671.0 1663.0,668.5 1671.3,664.3 1693.0,663.8 1703.0,660.1 1719.8,659.6 1726.5,658.5 1743.2,658.5 1749.0,657.3 1761.6,656.5 1771.6,652.6 1813.4,652.1 1821.7,644.8 1855.0,644.6" fill="none" stroke="#ffa500" stroke-width="1.1" stroke-dasharray="3 3"/><polyline points="592.0,638.0 603.4,637.2 631.0,636.8 646.8,631.0 661.9,628.0 668.5,628.5 685.3,635.7 695.3,635.7 712.0,621.8 719.5,621.5 727.0,619.3 751.3,604.2 762.0,604.2 775.5,611.0 783.8,614.6 792.2,616.8 800.6,618.0 815.6,618.0 822.3,619.3 830.6,622.6 839.0,623.0 846.5,626.8 859.0,627.0 872.4,629.3 880.8,632.6 892.5,635.7 905.0,635.7 919.4,628.5 927.7,626.5 933.6,623.8 937.0,623.8 943.6,633.0 962.0,633.0 967.8,631.0 976.2,629.8 994.6,629.6 999.6,628.1 1007.0,627.6 1013.0,624.8 1026.3,624.6 1031.3,623.5 1038.9,623.0 1048.0,618.0 1053.0,616.8 1065.6,616.8 1070.6,613.1 1079.0,613.1 1080.6,614.3 1094.8,614.3 1103.2,616.0 1110.7,621.0 1114.9,619.8 1143.3,619.8 1145.0,618.8 1167.5,618.8 1175.0,623.5 1183.4,624.8 1195.1,632.7 1207.6,640.7 1220.2,643.5 1226.0,644.0 1231.8,643.0 1247.7,643.0 1255.2,644.0 1272.0,656.8 1281.0,661.0 1302.0,676.9 1311.2,676.9 1317.0,673.5 1327.0,673.5 1332.0,675.7 1338.8,675.7 1344.7,673.5 1358.9,673.5 1361.4,672.7 1367.2,672.7 1372.2,674.7 1379.0,674.7 1384.8,672.7 1391.4,672.7 1395.6,674.7 1401.5,674.7 1413.2,668.5 1430.7,668.5 1437.4,671.9 1440.7,671.9 1448.3,663.5 1456.6,660.7 1464.0,655.6 1473.3,655.6 1480.0,659.3 1487.5,662.3 1503.4,681.0 1508.4,682.7 1520.0,682.7 1521.0,681.9 1526.8,681.9 1536.0,685.7 1546.0,686.0 1558.5,686.0 1579.4,689.7 1592.0,690.2 1596.0,691.9 1611.2,691.9 1616.2,690.2 1633.0,677.7 1648.0,661.0 1654.6,658.5 1663.0,657.6 1669.7,654.3 1689.0,654.3 1696.4,650.1 1704.8,648.1 1711.4,647.6 1719.8,645.9 1751.5,645.6 1761.6,644.8 1768.3,641.8 1776.6,640.9 1783.3,640.9 1791.7,643.9 1798.3,645.9 1801.7,645.9 1808.4,642.6 1815.0,641.4 1823.4,634.7 1830.0,637.9 1834.3,637.9 1836.8,636.7 1841.8,636.7 1848.5,640.0 1856.0,640.0" fill="none" stroke="#1e90ff" stroke-width="2.2" stroke-linejoin="round"/><polygon points="793.0,600.0 798.8,594.4 798.8,589.9 794.8,593.9 794.8,585.9 791.2,585.9 791.2,593.9 787.2,589.9 787.2,594.4" fill="#ff0000"/><polygon points="1177.0,609.9 1182.8,604.3 1182.8,599.8 1178.8,603.8 1178.8,595.8 1175.2,595.8 1175.2,603.8 1171.2,599.8 1171.2,604.3" fill="#ff0000"/><polygon points="1497.0,657.0 1502.8,651.4 1502.8,646.9 1498.8,650.9 1498.8,642.9 1495.2,642.9 1495.2,650.9 1491.2,646.9 1491.2,651.4" fill="#ff0000"/><polygon points="935.5,638.1 941.3,643.7 941.3,648.2 937.3,644.2 937.3,652.2 933.7,652.2 933.7,644.2 929.7,648.2 929.7,643.7" fill="#0000ff"/><polygon points="1447.5,678.3 1453.3,683.9 1453.3,688.4 1449.3,684.4 1449.3,692.4 1445.7,692.4 1445.7,684.4 1441.7,688.4 1441.7,683.9" fill="#0000ff"/><polygon points="1631.5,694.2 1637.3,699.8 1637.3,704.3 1633.3,700.3 1633.3,708.3 1629.7,708.3 1629.7,700.3 1625.7,704.3 1625.7,699.8" fill="#0000ff"/><path d="M592 644.5H1865" stroke="#c4c4c4" stroke-width="1" stroke-dasharray="3 3" fill="none" shape-rendering="crispEdges"/><polyline points="1645.0,393.2 1630.0,392.0 1610.0,390.2 1599.0,388.6 1583.0,383.0 1567.0,379.0 1551.0,376.0 1527.0,372.7 1503.0,372.0 1490.0,368.5 1473.7,367.2 1456.0,365.2 1433.6,364.5 1416.0,360.7 1381.0,360.2 1375.9,358.2 1360.9,356.0 1355.9,352.2 1340.8,352.0 1335.8,349.7 1315.8,348.4 1305.7,343.9 1285.7,340.9 1248.0,335.7 1233.0,333.4 1223.0,329.4 1205.5,328.4 1185.4,324.6 1167.9,323.0 1157.9,316.4 1142.8,311.9 1130.3,310.0 1117.8,305.8 1107.7,305.0 1097.7,300.6 1077.7,297.6 1056.4,296.3 1035.0,288.8 1020.0,286.5 996.0,280.4 981.0,278.0 967.0,272.3 952.0,266.4 943.0,260.5 933.0,252.0 925.4,244.4 920.0,236.5 913.5,229.0 909.0,222.0 905.5,217.5 898.0,210.5 891.0,204.0" fill="none" stroke="#0aa0e6" stroke-width="3.2" stroke-linejoin="round" stroke-linecap="round"/><polygon points="882.3,190.2 887.0,190.2 896.0,193.2 904.0,196.0 906.5,198.2 912.0,198.2 912.0,202.8 893.0,203.0 889.0,205.5 886.5,210.0 885.5,218.0 882.0,221.0 879.5,222.0 879.5,211.0 882.2,203.5" fill="#0aa0e6" stroke="#0aa0e6" stroke-width="0.8" stroke-linejoin="round"/><polyline points="1641.5,351.0 1643.0,365.0 1645.0,378.0 1647.0,393.0 1649.0,412.0 1650.5,430.0 1651.0,470.0 1650.4,480.0 1648.3,500.0 1647.0,520.0 1646.0,540.0 1645.0,580.0 1644.3,610.0 1644.0,640.0 1643.0,645.0 1640.0,652.0 1637.0,658.5" fill="none" stroke="#0aa0e6" stroke-width="3.2" stroke-linejoin="round" stroke-linecap="round"/><polygon points="1626.0,649.2 1629.0,649.3 1630.0,652.0 1633.8,651.2 1635.8,657.8 1638.5,658.5 1641.0,657.5 1647.5,652.5 1651.5,652.5 1652.0,656.0 1648.0,660.0 1634.0,677.0 1629.5,674.5 1627.5,661.0" fill="#0aa0e6" stroke="#0aa0e6" stroke-width="0.8" stroke-linejoin="round"/><path d="M884.8 196.4h1.2v2.4h-1.2zM892.2 197.4h2v2.2h-2zM903 199h1.2v1.2h-1.2zM1637 661.8h1.2v1.2h-1.2z" fill="#000"/><path d="M591.5 108V752M591 108.5H1866M1865.5 108V752M591 535.5H1866M591 537.5H1866M591 751.5H1866" stroke="#fff" stroke-width="1" fill="none" shape-rendering="crispEdges"/><path d="M1866 119.5H1870M1866 151.5H1870M1866 183.5H1870M1866 215.5H1870M1866 247.5H1870M1866 279.5H1870M1866 311.5H1870M1866 343.5H1870M1866 375.5H1870M1866 407.5H1870M1866 439.5H1870M1866 471.5H1870M1866 503.5H1870M1866 537.5H1870M1866 644.5H1870M1866 751.5H1870M591.5 752V756M655.5 752V756M719.5 752V756M783.5 752V756M847.5 752V756M911.5 752V756M975.5 752V756M1039.5 752V756M1103.5 752V756M1167.5 752V756M1231.5 752V756M1295.5 752V756M1359.5 752V756M1423.5 752V756M1487.5 752V756M1551.5 752V756M1615.5 752V756M1679.5 752V756M1743.5 752V756M1807.5 752V756" stroke="#fff" stroke-width="1" shape-rendering="crispEdges"/></svg>
<div class="t" style="left:596.00px;top:111.00px;font-size:9.5px;line-height:9.5px;color:#fff;letter-spacing:0.033px;">USDCHFrfd, H1:  US Dollar vs Swiss Franc</div>
<div class="t" style="left:596.00px;top:123.00px;font-size:9px;line-height:9px;color:#fff;">3</div>
<div class="t" style="left:604.00px;top:133.00px;font-size:15.85px;line-height:15.85px;color:#ff0000;font-family:'DejaVu Sans',sans-serif;">Максимальный селл сигнал: 70.58773</div>
<div class="t" style="left:604.00px;top:155.00px;font-size:15.85px;line-height:15.85px;color:#1e90ff;font-family:'DejaVu Sans',sans-serif;">Минимальный бай сигнал: 26.46783</div>
<div class="t" style="left:595.50px;top:543.00px;font-size:9.3px;line-height:9.3px;color:#fff;letter-spacing:-0.029px;">QQE(5) 52.06230 49.83286 0.00000 0.00000</div>
<div class="t" style="left:1871.00px;top:116.00px;font-size:9px;line-height:9px;color:#fff;letter-spacing:0.039px;">0.95985</div>
<div class="t" style="left:1871.00px;top:148.00px;font-size:9px;line-height:9px;color:#fff;letter-spacing:0.039px;">0.95800</div>
<div class="t" style="left:1871.00px;top:180.00px;font-size:9px;line-height:9px;color:#fff;letter-spacing:0.039px;">0.95615</div>
<div class="t" style="left:1871.00px;top:212.00px;font-size:9px;line-height:9px;color:#fff;letter-spacing:0.039px;">0.95430</div>
<div class="t" style="left:1871.00px;top:244.00px;font-size:9px;line-height:9px;color:#fff;letter-spacing:0.039px;">0.95245</div>
<div class="t" style="left:1871.00px;top:276.00px;font-size:9px;line-height:9px;color:#fff;letter-spacing:0.039px;">0.95060</div>
<div class="t" style="left:1871.00px;top:308.00px;font-size:9px;line-height:9px;color:#fff;letter-spacing:0.039px;">0.94875</div>
<div class="t" style="left:1871.00px;top:340.00px;font-size:9px;line-height:9px;color:#fff;letter-spacing:0.039px;">0.94690</div>
<div class="t" style="left:1871.00px;top:372.00px;font-size:9px;line-height:9px;color:#fff;letter-spacing:0.039px;">0.94505</div>
<div class="t" style="left:1871.00px;top:404.00px;font-size:9px;line-height:9px;color:#fff;letter-spacing:0.039px;">0.94320</div>
<div class="t" style="left:1871.00px;top:436.00px;font-size:9px;line-height:9px;color:#fff;letter-spacing:0.039px;">0.94135</div>
<div class="t" style="left:1871.00px;top:468.00px;font-size:9px;line-height:9px;color:#fff;letter-spacing:0.039px;">0.93950</div>
<div class="t" style="left:1871.00px;top:500.00px;font-size:9px;line-height:9px;color:#fff;letter-spacing:0.039px;">0.93765</div>
<div class="r" style="left:1867px;top:388px;width:39px;height:11px;background:#8796a8;"></div>
<div class="t" style="left:1871.00px;top:390.00px;font-size:9px;line-height:9px;color:#000;letter-spacing:0.039px;">0.94404</div>
<div class="t" style="left:1871.50px;top:539.00px;font-size:9px;line-height:9px;color:#fff;">105.00000</div>
<div class="t" style="left:1871.00px;top:641.00px;font-size:9px;line-height:9px;color:#fff;letter-spacing:0.008px;">50.00000</div>
<div class="t" style="left:1871.00px;top:738.00px;font-size:9px;line-height:9px;color:#fff;letter-spacing:0.039px;">0.00000</div>
<div class="t" style="left:1871.00px;top:742.00px;font-size:9px;line-height:9px;color:#fff;letter-spacing:0.059px;">-5.00000</div>
<div class="t" style="left:591.50px;top:757.00px;font-size:9.3px;line-height:9.3px;color:#fff;letter-spacing:-0.021px;">16 Nov 2022</div>
<div class="t" style="left:655.50px;top:757.00px;font-size:9.3px;line-height:9.3px;color:#fff;letter-spacing:0.098px;">17 Nov 06:00</div>
<div class="t" style="left:719.50px;top:757.00px;font-size:9.3px;line-height:9.3px;color:#fff;letter-spacing:0.098px;">17 Nov 14:00</div>
<div class="t" style="left:783.50px;top:757.00px;font-size:9.3px;line-height:9.3px;color:#fff;letter-spacing:0.098px;">17 Nov 22:00</div>
<div class="t" style="left:847.50px;top:757.00px;font-size:9.3px;line-height:9.3px;color:#fff;letter-spacing:0.098px;">18 Nov 06:00</div>
<div class="t" style="left:911.50px;top:757.00px;font-size:9.3px;line-height:9.3px;color:#fff;letter-spacing:0.098px;">18 Nov 14:00</div>
<div class="t" style="left:975.50px;top:757.00px;font-size:9.3px;line-height:9.3px;color:#fff;letter-spacing:0.098px;">18 Nov 22:00</div>
<div class="t" style="left:1039.50px;top:757.00px;font-size:9.3px;line-height:9.3px;color:#fff;letter-spacing:0.098px;">21 Nov 08:00</div>
<div class="t" style="left:1103.50px;top:757.00px;font-size:9.3px;line-height:9.3px;color:#fff;letter-spacing:0.098px;">21 Nov 16:00</div>
<div class="t" style="left:1167.50px;top:757.00px;font-size:9.3px;line-height:9.3px;color:#fff;letter-spacing:0.098px;">22 Nov 00:00</div>
<div class="t" style="left:1231.50px;top:757.00px;font-size:9.3px;line-height:9.3px;color:#fff;letter-spacing:0.098px;">22 Nov 08:00</div>
<div class="t" style="left:1295.50px;top:757.00px;font-size:9.3px;line-height:9.3px;color:#fff;letter-spacing:0.098px;">22 Nov 16:00</div>
<div class="t" style="left:1359.50px;top:757.00px;font-size:9.3px;line-height:9.3px;color:#fff;letter-spacing:0.098px;">23 Nov 00:00</div>
<div class="t" style="left:1423.50px;top:757.00px;font-size:9.3px;line-height:9.3px;color:#fff;letter-spacing:0.098px;">23 Nov 08:00</div>
<div class="t" style="left:1487.50px;top:757.00px;font-size:9.3px;line-height:9.3px;color:#fff;letter-spacing:0.098px;">23 Nov 16:00</div>
<div class="t" style="left:1551.50px;top:757.00px;font-size:9.3px;line-height:9.3px;color:#fff;letter-spacing:0.098px;">24 Nov 00:00</div>
<div class="t" style="left:1615.50px;top:757.00px;font-size:9.3px;line-height:9.3px;color:#fff;letter-spacing:0.098px;">24 Nov 08:00</div>
<div class="t" style="left:1679.50px;top:757.00px;font-size:9.3px;line-height:9.3px;color:#fff;letter-spacing:0.098px;">24 Nov 16:00</div>
<div class="t" style="left:1743.50px;top:757.00px;font-size:9.3px;line-height:9.3px;color:#fff;letter-spacing:0.098px;">25 Nov 00:00</div>
<div class="t" style="left:1807.50px;top:757.00px;font-size:9.3px;line-height:9.3px;color:#fff;letter-spacing:0.098px;">25 Nov 08:00</div>
<div class="t" style="left:1522.30px;top:229.00px;font-size:16.3px;line-height:16.3px;color:#0aa0e6;letter-spacing:-0.178px;font-weight:bold;">Если есть сигнал на покупку(синяя</div>
<div class="t" style="left:1522.30px;top:252.00px;font-size:16.3px;line-height:16.3px;color:#0aa0e6;letter-spacing:0.144px;font-weight:bold;">стрелка) и он минимальный за</div>
<div class="t" style="left:1522.30px;top:275.00px;font-size:16.3px;line-height:16.3px;color:#0aa0e6;letter-spacing:0.228px;font-weight:bold;">последние 600 баров  к примеру,то</div>
<div class="t" style="left:1522.30px;top:298.00px;font-size:16.3px;line-height:16.3px;color:#0aa0e6;letter-spacing:0.052px;font-weight:bold;">светник открывает сделку.</div>
<div class="t" style="left:1741.20px;top:298.00px;font-size:16.3px;line-height:16.3px;color:#ed1c24;letter-spacing:-0.703px;font-weight:bold;">Если</div>
<div class="t" style="left:1522.30px;top:321.00px;font-size:16.3px;line-height:16.3px;color:#ed1c24;letter-spacing:-0.171px;font-weight:bold;">появляется красная стрелка то сделка</div>
<div class="t" style="left:1522.30px;top:344.00px;font-size:16.3px;line-height:16.3px;color:#ed1c24;letter-spacing:-0.090px;font-weight:bold;">закрывается.</div>
<div class="r" style="left:589px;top:773px;width:1326px;height:1px;background:#fff;"></div>
<div class="r" style="left:589px;top:774px;width:1326px;height:22px;background:#f0f0f0;"></div>
<div class="r" style="left:588px;top:773px;width:1px;height:20px;background:#707070;"></div>
<div class="r" style="left:589px;top:774px;width:1326px;height:1px;background:#000;"></div>
<div class="t" style="left:602.40px;top:779.00px;font-size:12px;line-height:12px;color:#6e6e6e;letter-spacing:-0.682px;">EURUSDrfd,M1</div>
<div class="t" style="left:703.00px;top:779.00px;font-size:12px;line-height:12px;color:#6e6e6e;letter-spacing:-0.571px;">GBPUSDrfd,H1</div>
<div class="t" style="left:804.00px;top:779.00px;font-size:12px;line-height:12px;color:#6e6e6e;letter-spacing:-0.571px;">USDRUBrfd,H4</div>
<div class="t" style="left:904.00px;top:779.00px;font-size:12px;line-height:12px;color:#6e6e6e;letter-spacing:-0.512px;">EURRUBrfd,Daily</div>
<div class="t" style="left:1014.00px;top:779.00px;font-size:12px;line-height:12px;color:#6e6e6e;letter-spacing:-0.668px;">USDJPYrfd,H1</div>
<div class="t" style="left:1110.00px;top:779.00px;font-size:12px;line-height:12px;color:#6e6e6e;letter-spacing:-0.371px;">GZPrfd,H4</div>
<div class="t" style="left:1189.00px;top:779.00px;font-size:12px;line-height:12px;color:#6e6e6e;letter-spacing:-0.417px;">USDCHFrfd,M1</div>
<div class="t" style="left:1293.40px;top:779.00px;font-size:12px;line-height:12px;color:#6e6e6e;letter-spacing:-0.613px;">GBPUSDrfd,H1</div>
<div class="t" style="left:1496.00px;top:779.00px;font-size:12px;line-height:12px;color:#6e6e6e;letter-spacing:-0.612px;">EURUSDrfd,H3</div>
<div class="t" style="left:1596.30px;top:779.00px;font-size:12px;line-height:12px;color:#6e6e6e;letter-spacing:-0.348px;">AUDUSDrfd,M5</div>
<div class="r" style="left:691px;top:779px;width:1px;height:13px;background:#6a6a6a;"></div>
<div class="r" style="left:792px;top:779px;width:1px;height:13px;background:#6a6a6a;"></div>
<div class="r" style="left:893px;top:779px;width:1px;height:13px;background:#6a6a6a;"></div>
<div class="r" style="left:1002px;top:779px;width:1px;height:13px;background:#6a6a6a;"></div>
<div class="r" style="left:1098px;top:779px;width:1px;height:13px;background:#6a6a6a;"></div>
<div class="r" style="left:1176px;top:779px;width:1px;height:13px;background:#6a6a6a;"></div>
<div class="r" style="left:1281px;top:779px;width:1px;height:13px;background:#6a6a6a;"></div>
<div class="r" style="left:1584px;top:779px;width:1px;height:13px;background:#6a6a6a;"></div>
<div class="r" style="left:1689px;top:779px;width:1px;height:13px;background:#6a6a6a;"></div>
<div class="r" style="left:1383px;top:773px;width:100px;height:20px;box-sizing:border-box;border:1px solid #000;border-top:none;background:#fff;box-shadow:1px 1px 0 #000;"></div>
<div class="t" style="left:1394.00px;top:779.00px;font-size:12px;line-height:12px;color:#000;letter-spacing:-0.473px;">USDCHFrfd,H1</div>
<svg style="left:1703px;top:776px" width="14" height="16"><path d="M4 5v-1.6a2.3 2.3 0 0 1 4.6 0v1.6" fill="none" stroke="#dd9a1a" stroke-width="1.2"/><path d="M1.6 5h9.4l.9 9H0.7z" fill="#fbc70f" stroke="#dd9a1a" stroke-width="1"/></svg>
<div class="t" style="left:1725.00px;top:779.00px;font-size:12px;line-height:12px;color:#6e6e6e;letter-spacing:0.061px;">Маркет</div>
<svg style="left:1880px;top:780px" width="30" height="10"><path d="M6.5 0.5v8l-4-4zM23.5 0.5v8l4-4z" fill="#b4b4b4"/></svg>
<div class="r" style="left:589px;top:795px;width:1326px;height:1px;background:#fff;"></div>
<div class="r" style="left:1629px;top:725px;width:130px;height:49px;box-sizing:border-box;border:1px solid #9c9ca6;border-radius:4px;background:linear-gradient(180deg,#ffffff 0,#fdfdff 30%,#e6e6f1 100%);box-shadow:1px 2px 3px rgba(0,0,0,.4);"></div>
<div class="t" style="left:1635.60px;top:729.00px;font-size:12px;line-height:12px;color:#575757;letter-spacing:-0.723px;">QQE(5)</div>
<div class="t" style="left:1635.60px;top:744.00px;font-size:12px;line-height:12px;color:#575757;letter-spacing:-0.428px;">Time: 2022.11.24 10:00</div>
<div class="t" style="left:1635.60px;top:759.00px;font-size:12px;line-height:12px;color:#575757;letter-spacing:-0.671px;">BUY: 26.46783</div><div class="r" style="left:0px;top:796px;width:1915px;height:1px;background:#a0a0a0;"></div>
<div class="r" style="left:0px;top:797px;width:1915px;height:20px;background:#f0f0f0;"></div>
<svg style="left:3.5px;top:800px" width="8" height="8"><path d="M0.8 0.8L6.2 6.2M6.2 0.8L0.8 6.2" stroke="#000" stroke-width="1.7"/></svg>
<div class="r" style="left:16px;top:798px;width:1899px;height:1px;background:#a0a0a0;"></div>
<div class="r" style="left:16px;top:799px;width:1899px;height:18px;background:linear-gradient(180deg,#ffffff 0,#ffffff 55%,#f1f2f6 75%,#eef0f4 100%);"></div>
<div class="r" style="left:16px;top:799px;width:1px;height:18px;background:#a0a0a0;"></div>
<div class="r" style="left:205px;top:799px;width:1px;height:18px;background:#e3e4e8;"></div>
<div class="r" style="left:335px;top:799px;width:1px;height:18px;background:#e3e4e8;"></div>
<div class="r" style="left:476px;top:799px;width:1px;height:18px;background:#e3e4e8;"></div>
<div class="r" style="left:622px;top:799px;width:1px;height:18px;background:#e3e4e8;"></div>
<div class="r" style="left:767px;top:799px;width:1px;height:18px;background:#e3e4e8;"></div>
<div class="r" style="left:913px;top:799px;width:1px;height:18px;background:#e3e4e8;"></div>
<div class="r" style="left:1060px;top:799px;width:1px;height:18px;background:#e3e4e8;"></div>
<div class="r" style="left:1207px;top:799px;width:1px;height:18px;background:#e3e4e8;"></div>
<div class="r" style="left:1352px;top:799px;width:1px;height:18px;background:#e3e4e8;"></div>
<div class="r" style="left:1512px;top:799px;width:1px;height:18px;background:#e3e4e8;"></div>
<div class="t" style="left:22.00px;top:805.00px;font-size:12px;line-height:12px;color:#000;letter-spacing:0.038px;">Символ</div>
<div class="t" style="left:212.00px;top:805.00px;font-size:12px;line-height:12px;color:#000;letter-spacing:0.068px;">Тикет</div>
<div class="t" style="left:435.83px;top:805.00px;font-size:12px;line-height:12px;color:#000;letter-spacing:-0.108px;">Время</div>
<div class="t" style="left:565.85px;top:805.00px;font-size:12px;line-height:12px;color:#000;letter-spacing:0.073px;">Тип</div>
<svg style="left:604px;top:807px" width="8" height="5"><path d="M0.3 4.5L3.8 0.8 7.3 4.5z" fill="#222"/></svg>
<div class="t" style="left:725.41px;top:805.00px;font-size:12px;line-height:12px;color:#000;letter-spacing:-0.036px;">Объем</div>
<div class="t" style="left:880.98px;top:805.00px;font-size:12px;line-height:12px;color:#000;letter-spacing:-0.108px;">Цена</div>
<div class="t" style="left:1031.66px;top:805.00px;font-size:12px;line-height:12px;color:#000;letter-spacing:-0.336px;">S / L</div>
<div class="t" style="left:1177.28px;top:805.00px;font-size:12px;line-height:12px;color:#000;letter-spacing:-0.223px;">T / P</div>
<div class="t" style="left:1318.98px;top:805.00px;font-size:12px;line-height:12px;color:#000;letter-spacing:-0.108px;">Цена</div>
<div class="t" style="left:1457.40px;top:805.00px;font-size:12px;line-height:12px;color:#000;letter-spacing:-0.109px;">Прибыль</div>
<div class="t" style="left:1835.33px;top:805.00px;font-size:12px;line-height:12px;color:#000;letter-spacing:-0.091px;">Комментарий</div>
</body></html>
